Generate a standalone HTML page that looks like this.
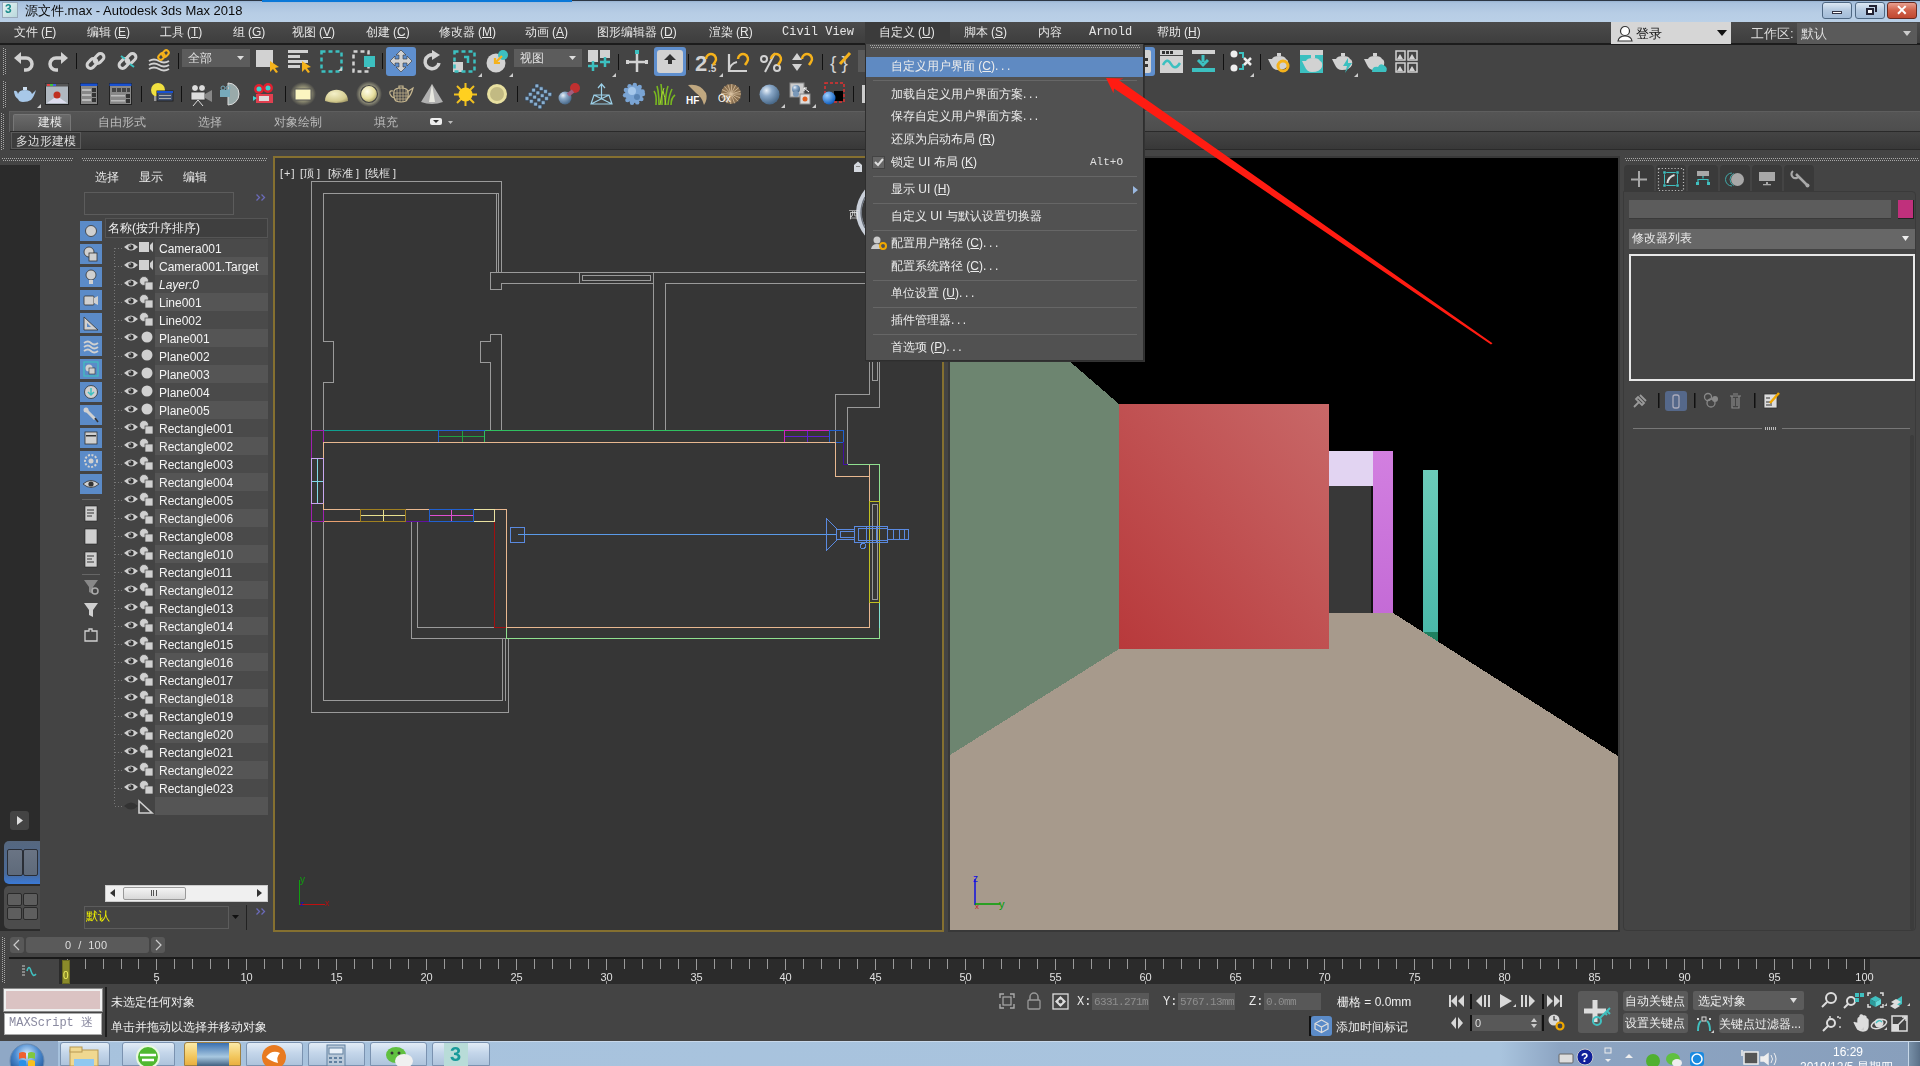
<!DOCTYPE html>
<html><head><meta charset="utf-8">
<style>
*{margin:0;padding:0;box-sizing:border-box}
html,body{width:1920px;height:1066px;overflow:hidden;-webkit-font-smoothing:antialiased;background:#444444;font-family:"Liberation Sans",sans-serif;font-size:12px;color:#dcdcdc;position:relative}
.a{position:absolute}
.t{position:absolute;white-space:nowrap;line-height:1;will-change:transform}
svg{position:absolute;overflow:visible}
.dh{position:absolute;height:3px;background:repeating-linear-gradient(90deg,#a8a8a8 0 1px,transparent 1px 2px) 0 0/100% 1px no-repeat,repeating-linear-gradient(90deg,transparent 0 1px,#a8a8a8 1px 2px) 0 2px/100% 1px no-repeat}
.dv{position:absolute;width:3px;background:repeating-linear-gradient(#a8a8a8 0 1px,transparent 1px 2px) 0 0/1px 100% no-repeat,repeating-linear-gradient(transparent 0 1px,#a8a8a8 1px 2px) 2px 0/1px 100% no-repeat}
</style></head><body>
<!-- title bar -->
<div class="a" style="left:0;top:0;width:1920px;height:22px;background:linear-gradient(#8eaacb 0,#a9c2de 3px,#b7cde5 60%,#bad0e7)"></div>
<div class="a" style="left:0;top:0;width:1920px;height:1px;background:#2c3644"></div><div class="a" style="left:262px;top:0;width:310px;height:2px;background:#0a78d8"></div>
<div class="a" style="left:2px;top:2px;width:16px;height:16px;background:linear-gradient(135deg,#e8f4f4,#b8d8dc);border:1px solid #9ab"></div>
<div class="t" style="left:5px;top:3px;font-size:12px;font-weight:bold;color:#1b8c8c">3</div>
<div class="t" style="left:25px;top:4px;font-size:13px;color:#0a0a0a">源文件.max - Autodesk 3ds Max 2018</div>
<!-- window buttons -->
<div class="a" style="left:1822px;top:2px;width:30px;height:17px;border:1px solid #4f6883;border-radius:3px;background:linear-gradient(#dce8f4,#b4c9e0 50%,#a3bcd8)"></div>
<div class="a" style="left:1832px;top:11px;width:10px;height:3px;background:#fff;border:1px solid #334"></div>
<div class="a" style="left:1855px;top:2px;width:30px;height:17px;border:1px solid #4f6883;border-radius:3px;background:linear-gradient(#dce8f4,#b4c9e0 50%,#a3bcd8)"></div>
<div class="a" style="left:1866px;top:8px;width:8px;height:7px;border:2px solid #223;background:#fff"></div>
<div class="a" style="left:1869px;top:5px;width:8px;height:7px;border:2px solid #223;border-left:0;border-bottom:0"></div>
<div class="a" style="left:1887px;top:2px;width:30px;height:17px;border:1px solid #6a2a20;border-radius:3px;background:linear-gradient(#e8a090,#d06048 50%,#c04830)"></div>
<div class="t" style="left:1896px;top:3px;font-size:14px;font-weight:bold;color:#fff">✕</div>

<!-- menu bar -->
<div class="a" style="left:0;top:22px;width:1920px;height:22px;background:linear-gradient(#4b4b4b,#444 50%,#3d3d3d)"></div>
<div class="a" style="left:0;top:43px;width:1920px;height:2px;background:#1c1c1c"></div>
<div class="a" style="left:865px;top:22px;width:85px;height:22px;background:#3b3b3b"></div>

<!-- login -->
<div class="a" style="left:1611px;top:22px;width:120px;height:22px;background:#d6d6d6"></div>
<svg style="left:1616px;top:25px" width="18" height="17"><circle cx="9" cy="6" r="4.5" fill="#fff" stroke="#333" stroke-width="1.2"/><path d="M2 16 Q3 11 9 11 Q15 11 16 16 Z" fill="#fff" stroke="#333" stroke-width="1.2"/></svg>
<div class="t" style="left:1636px;top:27px;font-size:13px;color:#111">登录</div>
<svg style="left:1717px;top:30px" width="10" height="6"><path d="M0 0 L10 0 L5 6Z" fill="#111"/></svg>
<div class="t" style="left:1751px;top:27px;font-size:13px;color:#ddd">工作区:</div>
<div class="a" style="left:1797px;top:23px;width:120px;height:21px;background:#5a5a5a"></div>
<div class="t" style="left:1801px;top:27px;font-size:13px;color:#ddd">默认</div>
<svg style="left:1903px;top:31px" width="8" height="5"><path d="M0 0 L8 0 L4 5Z" fill="#ccc"/></svg>

<!-- toolbar -->
<div class="a" style="left:0;top:45px;width:1920px;height:65px;background:#444"></div>
<div class="dv" style="left:3px;top:48px;height:27px"></div>
<div class="dv" style="left:3px;top:81px;height:27px"></div>
<div class="dv" style="left:1px;top:113px;height:37px"></div>

<!-- ribbon -->
<div class="a" style="left:9px;top:111px;width:1911px;height:21px;background:linear-gradient(#555,#4d4d4d);border-top:1px solid #5e5e5e;border-left:1px solid #5e5e5e"></div>
<div class="a" style="left:13px;top:114px;width:58px;height:18px;background:linear-gradient(#6a6a6a,#555);border:1px solid #777;border-bottom:0;border-radius:2px 2px 0 0"></div>
<div class="t" style="left:38px;top:116px;font-size:12px;color:#e8e8e8">建模</div>
<div class="t" style="left:98px;top:116px;font-size:12px;color:#bbb">自由形式</div>
<div class="t" style="left:198px;top:116px;font-size:12px;color:#bbb">选择</div>
<div class="t" style="left:274px;top:116px;font-size:12px;color:#bbb">对象绘制</div>
<div class="t" style="left:374px;top:116px;font-size:12px;color:#bbb">填充</div>
<div class="a" style="left:430px;top:118px;width:12px;height:7px;background:#eee;border-radius:2px"></div>
<svg style="left:433px;top:120px" width="6" height="4"><path d="M0 0 L6 0 L3 3Z" fill="#333"/></svg>
<svg style="left:448px;top:121px" width="5" height="3"><path d="M0 0 L5 0 L2.5 3Z" fill="#bbb"/></svg>
<div class="a" style="left:10px;top:131px;width:1910px;height:1px;background:#2a2a2a"></div><div class="a" style="left:10px;top:132px;width:1910px;height:18px;background:linear-gradient(#444,#383838);border-bottom:1px solid #2a2a2a"></div>
<div class="a" style="left:11px;top:132px;width:70px;height:17px;background:#3c3c3c;border:1px solid #5a5a5a"></div>
<div class="t" style="left:16px;top:135px;font-size:12px;color:#ddd">多边形建模</div>

<!-- dotted separators -->
<div class="dh" style="left:2px;top:158px;width:71px"></div>
<div class="dh" style="left:82px;top:158px;width:185px"></div>
<div class="dh" style="left:1625px;top:158px;width:294px"></div>

<div class="t" style="left:14px;top:26px;font-size:12px;color:#e6e6e6">文件<span style="margin-left:3px">(<u>F</u>)</span></div>
<div class="t" style="left:87px;top:26px;font-size:12px;color:#e6e6e6">编辑<span style="margin-left:3px">(<u>E</u>)</span></div>
<div class="t" style="left:160px;top:26px;font-size:12px;color:#e6e6e6">工具<span style="margin-left:3px">(<u>T</u>)</span></div>
<div class="t" style="left:233px;top:26px;font-size:12px;color:#e6e6e6">组<span style="margin-left:3px">(<u>G</u>)</span></div>
<div class="t" style="left:292px;top:26px;font-size:12px;color:#e6e6e6">视图<span style="margin-left:3px">(<u>V</u>)</span></div>
<div class="t" style="left:366px;top:26px;font-size:12px;color:#e6e6e6">创建<span style="margin-left:3px">(<u>C</u>)</span></div>
<div class="t" style="left:439px;top:26px;font-size:12px;color:#e6e6e6">修改器<span style="margin-left:3px">(<u>M</u>)</span></div>
<div class="t" style="left:525px;top:26px;font-size:12px;color:#e6e6e6">动画<span style="margin-left:3px">(<u>A</u>)</span></div>
<div class="t" style="left:597px;top:26px;font-size:12px;color:#e6e6e6">图形编辑器<span style="margin-left:3px">(<u>D</u>)</span></div>
<div class="t" style="left:709px;top:26px;font-size:12px;color:#e6e6e6">渲染<span style="margin-left:3px">(<u>R</u>)</span></div>
<div class="t" style="left:782px;top:26px;font-size:12px;font-family:'Liberation Mono',monospace;color:#e6e6e6">Civil View</div>
<div class="t" style="left:879px;top:26px;font-size:12px;color:#e6e6e6">自定义<span style="margin-left:3px">(<u>U</u>)</span></div>
<div class="t" style="left:964px;top:26px;font-size:12px;color:#e6e6e6">脚本<span style="margin-left:3px">(<u>S</u>)</span></div>
<div class="t" style="left:1038px;top:26px;font-size:12px;color:#e6e6e6">内容</div>
<div class="t" style="left:1089px;top:26px;font-size:12px;font-family:'Liberation Mono',monospace;color:#e6e6e6">Arnold</div>
<div class="t" style="left:1157px;top:26px;font-size:12px;color:#e6e6e6">帮助<span style="margin-left:3px">(<u>H</u>)</span></div>
<svg style="left:14px;top:52px" width="22" height="19" viewBox="0 0 22 19"><path d="M3 6 H12 A6 6 0 0 1 12 18 H10" fill="none" stroke="#d2d2d2" stroke-width="3.5"/><path d="M0 6 L7 0 L7 12Z" fill="#d2d2d2"/></svg>
<svg style="left:46px;top:52px" width="22" height="19" viewBox="0 0 22 19"><path d="M19 6 H10 A6 6 0 0 0 10 18 H12" fill="none" stroke="#d2d2d2" stroke-width="3.5"/><path d="M22 6 L15 0 L15 12Z" fill="#d2d2d2"/></svg>
<div class="a" style="left:76px;top:53px;width:1px;height:16px;background:#111"></div>
<svg style="left:85px;top:51px" width="21" height="21" viewBox="0 0 21 21"><g fill="none" stroke="#d2d2d2" stroke-width="3"><rect x="1.5" y="9" width="11" height="7" rx="3.5" transform="rotate(-45 7 12.5)"/><rect x="8.5" y="4" width="11" height="7" rx="3.5" transform="rotate(-45 14 7.5)"/></g></svg>
<svg style="left:117px;top:51px" width="21" height="21" viewBox="0 0 21 21"><g fill="none" stroke="#d2d2d2" stroke-width="3"><rect x="1.5" y="9" width="11" height="7" rx="3.5" transform="rotate(-45 7 12.5)"/><rect x="8.5" y="4" width="11" height="7" rx="3.5" transform="rotate(-45 14 7.5)"/></g><path d="M4 5 L8 8 M13 13 L17 16" stroke="#3cc0c0" stroke-width="2"/></svg>
<svg style="left:148px;top:50px" width="22" height="22" viewBox="0 0 22 22"><g fill="none" stroke="#d2d2d2" stroke-width="2"><path d="M1 11 Q6 8 11 11 T21 11"/><path d="M1 15 Q6 12 11 15 T21 15"/><path d="M1 19 Q6 16 11 19 T21 19"/></g><g fill="none" stroke="#f5b21b" stroke-width="2"><rect x="10" y="4" width="7" height="5" rx="2.5" transform="rotate(-45 13.5 6.5)"/><rect x="14" y="1" width="7" height="5" rx="2.5" transform="rotate(-45 17.5 3.5)"/></g></svg>
<div class="a" style="left:178px;top:53px;width:1px;height:16px;background:#111"></div>
<div class="a" style="left:182px;top:49px;width:68px;height:18px;background:#5c5c5c"></div>
<div class="t" style="left:188px;top:52px;font-size:12px;color:#e0e0e0">全部</div>
<svg style="left:237px;top:56px" width="7" height="4" viewBox="0 0 7 4"><path d="M0 0 L7 0 L3.5 4Z" fill="#ddd"/></svg>
<svg style="left:256px;top:50px" width="23" height="23" viewBox="0 0 23 23"><rect x="0" y="0" width="17" height="17" fill="#d2d2d2"/><path d="M14 11 L14 22 L17 19 L20 23 L22 22 L19 18 L23 17Z" fill="#f5b21b"/></svg>
<svg style="left:288px;top:50px" width="23" height="23" viewBox="0 0 23 23"><g fill="#d2d2d2"><rect x="0" y="0" width="20" height="3"/><rect x="0" y="5" width="12" height="3"/><rect x="0" y="10" width="20" height="3"/><rect x="0" y="15" width="12" height="3"/></g><path d="M14 11 L14 22 L17 19 L20 23 L22 22 L19 18 L23 17Z" fill="#f5b21b"/></svg>
<svg style="left:320px;top:50px" width="23" height="23" viewBox="0 0 23 23"><rect x="1.5" y="1.5" width="20" height="20" fill="none" stroke="#3cc0c0" stroke-width="2.5" stroke-dasharray="4 3"/></svg>
<svg style="left:338px;top:67px" width="4" height="4" viewBox="0 0 4 4"><path d="M4 0 L4 4 L0 4Z" fill="#ccc"/></svg>
<svg style="left:352px;top:50px" width="24" height="23" viewBox="0 0 24 23"><rect x="1.5" y="1.5" width="15" height="20" fill="none" stroke="#d2d2d2" stroke-width="2.5" stroke-dasharray="4 3"/><rect x="12" y="6" width="11" height="11" fill="#3cc0c0"/></svg>
<div class="a" style="left:382px;top:53px;width:1px;height:16px;background:#111"></div>
<div class="a" style="left:386px;top:47px;width:30px;height:29px;background:#5f8fce;border-radius:3px"></div>
<svg style="left:390px;top:50px" width="22" height="22" viewBox="0 0 22 22"><path d="M11 0 L16 5 L13 5 L13 9 L17 9 L17 6 L22 11 L17 16 L17 13 L13 13 L13 17 L16 17 L11 22 L6 17 L9 17 L9 13 L5 13 L5 16 L0 11 L5 6 L5 9 L9 9 L9 5 L6 5Z" fill="#d2d2d2" stroke="#333" stroke-width="0.6"/></svg>
<svg style="left:423px;top:50px" width="20" height="22" viewBox="0 0 20 22"><path d="M16 13 A7 7 0 1 1 11 5" fill="none" stroke="#d2d2d2" stroke-width="3.5"/><path d="M9 0 L17 5 L9 10Z" fill="#d2d2d2"/></svg>
<svg style="left:453px;top:50px" width="23" height="23" viewBox="0 0 23 23"><rect x="0" y="12" width="10" height="10" fill="#d2d2d2"/><rect x="1.5" y="1.5" width="20" height="20" fill="none" stroke="#3cc0c0" stroke-width="2.5" stroke-dasharray="4 3"/><path d="M11 7 H15 V13" fill="none" stroke="#3cc0c0" stroke-width="2.5"/></svg>
<svg style="left:478px;top:73px" width="4" height="4" viewBox="0 0 4 4"><path d="M4 0 L4 4 L0 4Z" fill="#ccc"/></svg>
<svg style="left:486px;top:50px" width="23" height="23" viewBox="0 0 23 23"><circle cx="10" cy="13" r="9.5" fill="#d2d2d2"/><circle cx="17" cy="5" r="5" fill="#3cc0c0"/><path d="M16 6 L9 13 M9 8 V13 H14" stroke="#f5b21b" stroke-width="2.2" fill="none"/></svg>
<svg style="left:509px;top:73px" width="4" height="4" viewBox="0 0 4 4"><path d="M4 0 L4 4 L0 4Z" fill="#ccc"/></svg>
<div class="a" style="left:514px;top:49px;width:68px;height:18px;background:#5c5c5c"></div>
<div class="t" style="left:520px;top:52px;font-size:12px;color:#e0e0e0">视图</div>
<svg style="left:569px;top:56px" width="7" height="4" viewBox="0 0 7 4"><path d="M0 0 L7 0 L3.5 4Z" fill="#ddd"/></svg>
<svg style="left:588px;top:50px" width="23" height="23" viewBox="0 0 23 23"><path d="M0 0 H10 V12 H0Z M12 0 H22 V8 H12Z" fill="#d2d2d2"/><path d="M5 11 V21 M0 16 H10 M17 7 V17 M12 12 H22" stroke="#3cc0c0" stroke-width="2.5"/></svg>
<svg style="left:612px;top:73px" width="4" height="4" viewBox="0 0 4 4"><path d="M4 0 L4 4 L0 4Z" fill="#ccc"/></svg>
<div class="a" style="left:618px;top:54px;width:1px;height:16px;background:#111"></div>
<svg style="left:626px;top:50px" width="23" height="23" viewBox="0 0 23 23"><path d="M11 2 V22 M0 12 H22" stroke="#d2d2d2" stroke-width="2.5"/><rect x="9" y="0" width="4" height="4" fill="#3cc0c0"/><rect x="0" y="10" width="3" height="4" fill="#d2d2d2"/><rect x="19" y="10" width="3" height="4" fill="#d2d2d2"/></svg>
<div class="a" style="left:654px;top:47px;width:32px;height:29px;background:#5f8fce;border-radius:3px"></div>
<svg style="left:657px;top:50px" width="26" height="23" viewBox="0 0 26 23"><rect x="0" y="0" width="26" height="23" rx="3" fill="#d2d2d2"/><path d="M13 4 L19 10 L15 10 L15 14 L11 14 L11 10 L7 10Z" fill="#333"/></svg>
<div class="a" style="left:688px;top:54px;width:1px;height:16px;background:#111"></div>
<svg style="left:695px;top:50px" width="26" height="23" viewBox="0 0 26 23"><text x="0" y="21" font-size="22" font-weight="bold" fill="#d2d2d2" font-family="Liberation Sans">2</text><text x="13" y="22" font-size="10" font-weight="bold" fill="#d2d2d2" font-family="Liberation Sans">.5</text><path d="M11 9 A5 5 0 1 1 20 12 L18 15" fill="none" stroke="#f5b21b" stroke-width="2.5"/></svg>
<svg style="left:719px;top:73px" width="4" height="4" viewBox="0 0 4 4"><path d="M4 0 L4 4 L0 4Z" fill="#ccc"/></svg>
<svg style="left:727px;top:50px" width="24" height="23" viewBox="0 0 24 23"><path d="M2 4 V21 H20 M2 21 A10 10 0 0 1 10 12" fill="none" stroke="#d2d2d2" stroke-width="2.2"/><path d="M11 9 A5 5 0 1 1 20 12 L18 15" fill="none" stroke="#f5b21b" stroke-width="2.5"/></svg>
<svg style="left:760px;top:50px" width="24" height="23" viewBox="0 0 24 23"><circle cx="4" cy="9" r="3" fill="none" stroke="#d2d2d2" stroke-width="2"/><circle cx="17" cy="18" r="3" fill="none" stroke="#d2d2d2" stroke-width="2"/><path d="M5 22 L15 3" stroke="#d2d2d2" stroke-width="2"/><path d="M11 9 A5 5 0 1 1 20 12 L18 15" fill="none" stroke="#f5b21b" stroke-width="2.5"/></svg>
<svg style="left:791px;top:50px" width="24" height="23" viewBox="0 0 24 23"><path d="M1 10 L6 3 L11 10Z M1 14 L6 21 L11 14Z" fill="#d2d2d2"/><path d="M11 9 A5 5 0 1 1 20 12 L18 15" fill="none" stroke="#f5b21b" stroke-width="2.5"/></svg>
<div class="a" style="left:822px;top:54px;width:1px;height:16px;background:#111"></div>
<svg style="left:830px;top:50px" width="23" height="23" viewBox="0 0 23 23"><text x="0" y="19" font-size="19" fill="#d2d2d2" font-family="Liberation Sans">{ }</text><path d="M10 14 L20 3" stroke="#f5b21b" stroke-width="3"/></svg>
<div class="a" style="left:858px;top:50px;width:8px;height:22px;background:#5a5a5a"></div>
<div class="a" style="left:1143px;top:47px;width:12px;height:29px;background:#5f8fce;border-radius:0 3px 3px 0"></div>
<svg style="left:1143px;top:50px" width="9" height="23" viewBox="0 0 9 23"><rect x="0" y="0" width="8" height="23" rx="2" fill="#d2d2d2"/><rect x="0" y="8" width="5" height="3" fill="#333"/><rect x="0" y="14" width="5" height="3" fill="#333"/></svg>
<svg style="left:1160px;top:50px" width="23" height="23" viewBox="0 0 23 23"><rect x="0" y="0" width="23" height="23" fill="#d2d2d2"/><rect x="0" y="5" width="23" height="1" fill="#444"/><rect x="2" y="1" width="3" height="3" fill="#333"/><rect x="6" y="1" width="3" height="3" fill="#333"/><rect x="10" y="1" width="3" height="3" fill="#333"/><path d="M3 15 Q7 7 11 14 T20 13" fill="none" stroke="#3cc0c0" stroke-width="2.5"/></svg>
<svg style="left:1192px;top:50px" width="23" height="23" viewBox="0 0 23 23"><rect x="0" y="0" width="23" height="4" fill="#d2d2d2"/><rect x="0" y="18" width="23" height="4" fill="#3cc0c0"/><path d="M11 5 V12 M6 10 L11 15 L16 10" stroke="#3cc0c0" stroke-width="3" fill="none"/></svg>
<div class="a" style="left:1223px;top:54px;width:1px;height:16px;background:#111"></div>
<svg style="left:1230px;top:50px" width="23" height="23" viewBox="0 0 23 23"><circle cx="4" cy="4" r="3.5" fill="#eee"/><circle cx="4" cy="18" r="3.5" fill="#eee"/><path d="M9 3 H13 V8 M9 19 H13 V14" stroke="#3cc0c0" stroke-width="2" fill="none"/><path d="M14 8 L21 15 M21 8 L14 15" stroke="#eee" stroke-width="2.5"/></svg>
<svg style="left:1250px;top:73px" width="4" height="4" viewBox="0 0 4 4"><path d="M4 0 L4 4 L0 4Z" fill="#ccc"/></svg>
<div class="a" style="left:1260px;top:54px;width:1px;height:16px;background:#111"></div>
<svg style="left:1267px;top:50px" width="24" height="23" viewBox="0 0 24 23"><path d="M1 9 L5 9 Q6 6 12 6 Q18 6 19 9 Q22 10 21 15 Q19 20 11 20 Q6 20 4 15Z" fill="#d2d2d2"/><rect x="10" y="3" width="4" height="3" fill="#d2d2d2"/><circle cx="16" cy="16" r="5" fill="none" stroke="#f5b21b" stroke-width="3"/></svg>
<svg style="left:1300px;top:50px" width="23" height="23" viewBox="0 0 23 23"><rect x="0" y="0" width="23" height="23" fill="#3cc0c0"/><rect x="0" y="0" width="23" height="5" fill="#d2d2d2"/><g transform="translate(1 2)"><path d="M1 9 L5 9 Q6 6 12 6 Q18 6 19 9 Q22 10 21 15 Q19 20 11 20 Q6 20 4 15Z" fill="#d2d2d2"/><rect x="10" y="3" width="4" height="3" fill="#d2d2d2"/></g></svg>
<svg style="left:1331px;top:50px" width="24" height="23" viewBox="0 0 24 23"><path d="M1 9 L5 9 Q6 6 12 6 Q18 6 19 9 Q22 10 21 15 Q19 20 11 20 Q6 20 4 15Z" fill="#d2d2d2"/><rect x="10" y="3" width="4" height="3" fill="#d2d2d2"/><path d="M17 8 L12 16 H16 L14 23 L21 13 H17Z" fill="#3cc0c0"/></svg>
<svg style="left:1354px;top:73px" width="4" height="4" viewBox="0 0 4 4"><path d="M4 0 L4 4 L0 4Z" fill="#ccc"/></svg>
<svg style="left:1363px;top:50px" width="24" height="23" viewBox="0 0 24 23"><path d="M1 9 L5 9 Q6 6 12 6 Q18 6 19 9 Q22 10 21 15 Q19 20 11 20 Q6 20 4 15Z" fill="#d2d2d2"/><rect x="10" y="3" width="4" height="3" fill="#d2d2d2"/><path d="M9 22 Q9 16 15 17 Q17 12 22 16 Q25 18 23 22Z" fill="#3cc0c0"/></svg>
<svg style="left:1395px;top:50px" width="23" height="23" viewBox="0 0 23 23"><g fill="none" stroke="#d2d2d2" stroke-width="1.5"><rect x="1" y="1" width="9" height="9"/><rect x="13" y="1" width="9" height="9"/><rect x="1" y="13" width="9" height="9"/><rect x="13" y="13" width="9" height="9"/></g><g fill="#d2d2d2"><path d="M2 9 L5 4 L8 9Z M14 9 L17 4 L20 9Z M2 21 L5 16 L8 21Z M14 21 L17 16 L20 21Z"/></g></svg>
<svg style="left:0px;top:0px" width="1" height="1" viewBox="0 0 1 1"><defs><radialGradient id="sph" cx="0.35" cy="0.3" r="0.7"><stop offset="0" stop-color="#e8f0f8"/><stop offset="0.4" stop-color="#8aa8c8"/><stop offset="1" stop-color="#4a6a8a"/></radialGradient><radialGradient id="ysph" cx="0.4" cy="0.35" r="0.7"><stop offset="0" stop-color="#fffde8"/><stop offset="0.6" stop-color="#e8e0a0"/><stop offset="1" stop-color="#a09860"/></radialGradient><radialGradient id="bsph" cx="0.35" cy="0.3" r="0.7"><stop offset="0" stop-color="#a0d0ff"/><stop offset="1" stop-color="#1060c0"/></radialGradient></defs></svg>
<svg style="left:14px;top:85px" width="22" height="17" viewBox="0 0 22 17"><path d="M0 6 Q3 5 4 9 Q5 5 11 5 Q17 5 18 9 L22 5 Q20 12 17 15 Q14 17 9 17 Q5 17 4 14 Q0 11 0 6Z" fill="#a8c8e8"/><rect x="9" y="2" width="4" height="3" fill="#cde"/></svg>
<svg style="left:37px;top:104px" width="4" height="4" viewBox="0 0 4 4"><path d="M4 0 L4 4 L0 4Z" fill="#ccc"/></svg>
<svg style="left:45px;top:83px" width="24" height="22" viewBox="0 0 24 22"><rect x="0.5" y="0.5" width="23" height="21" fill="#b0b8c0" stroke="#222"/><rect x="0.5" y="0.5" width="23" height="3" fill="#555"/><rect x="2" y="1" width="3" height="2" fill="#e04040"/><rect x="5" y="1" width="3" height="2" fill="#40c040"/><rect x="8" y="1" width="3" height="2" fill="#4060e0"/><path d="M2 20 L12 13 L22 20Z" fill="#dde"/><circle cx="12" cy="12" r="3.5" fill="#c03020"/></svg>
<svg style="left:80px;top:83px" width="18" height="22" viewBox="0 0 18 22"><rect x="0.5" y="0.5" width="17" height="21" fill="#888" stroke="#222"/><rect x="0.5" y="0.5" width="17" height="2.5" fill="#1850d0"/><g fill="#bbb"><rect x="2" y="6" width="9" height="2"/><rect x="2" y="11" width="9" height="2"/><rect x="2" y="16" width="9" height="2"/></g><g fill="#333"><rect x="12" y="5" width="4" height="4"/><rect x="12" y="10" width="4" height="4"/><rect x="12" y="15" width="4" height="4"/></g></svg>
<svg style="left:109px;top:83px" width="23" height="22" viewBox="0 0 23 22"><rect x="0.5" y="0.5" width="22" height="21" fill="#888" stroke="#222"/><rect x="0.5" y="0.5" width="22" height="2.5" fill="#1850d0"/><g fill="#444"><rect x="3" y="5" width="4" height="4"/><rect x="8" y="5" width="4" height="4"/><rect x="13" y="5" width="4" height="4"/><rect x="18" y="5" width="3" height="4"/></g><g fill="#bbb"><rect x="2" y="12" width="14" height="1.5"/><rect x="2" y="17" width="14" height="1.5"/></g><g fill="#333"><rect x="17" y="11" width="4" height="4"/><rect x="17" y="16" width="4" height="4"/></g></svg>
<div class="a" style="left:141px;top:86px;width:1px;height:16px;background:#111"></div>
<svg style="left:150px;top:83px" width="23" height="22" viewBox="0 0 23 22"><circle cx="8" cy="7" r="7" fill="#f0e040"/><rect x="4" y="13" width="7" height="5" fill="#999"/><rect x="7" y="8" width="16" height="10" fill="#405070" stroke="#222"/><rect x="7" y="8" width="16" height="2" fill="#1850d0"/><g fill="#aaa"><rect x="9" y="12" width="12" height="1"/><rect x="9" y="15" width="12" height="1"/></g></svg>
<div class="a" style="left:181px;top:86px;width:1px;height:16px;background:#111"></div>
<svg style="left:190px;top:84px" width="22" height="22" viewBox="0 0 22 22"><circle cx="5" cy="4" r="3.5" fill="#ddd" stroke="#333"/><circle cx="12" cy="4" r="3.5" fill="#ddd" stroke="#333"/><rect x="1" y="8" width="14" height="8" fill="#ddd" stroke="#333" stroke-width="0.8"/><path d="M15 10 L22 6 V18 L15 14Z" fill="#888"/><path d="M8 16 L3 22 M8 16 L13 22" stroke="#ddd" stroke-width="1"/></svg>
<svg style="left:220px;top:83px" width="23" height="22" viewBox="0 0 23 22"><path d="M8 0 A11 11 0 0 1 8 22Z" fill="#9aa"/><path d="M8 0 A11 11 0 0 1 8 22Z" fill="none" stroke="#ddd"/><rect x="0" y="7" width="10" height="7" fill="#7ab" /><circle cx="3" cy="5" r="2" fill="none" stroke="#7ab"/><circle cx="8" cy="5" r="2" fill="none" stroke="#7ab"/></svg>
<svg style="left:253px;top:83px" width="23" height="22" viewBox="0 0 23 22"><circle cx="6" cy="6" r="5" fill="#e02030"/><circle cx="6" cy="6" r="2.5" fill="#40d0d0"/><circle cx="15" cy="5" r="5" fill="#e02030"/><circle cx="15" cy="5" r="2.5" fill="#40d0d0"/><rect x="3" y="11" width="17" height="9" fill="#e04050"/><rect x="6" y="13" width="10" height="5" fill="#ddd"/><path d="M0 13 L4 15 L0 18Z" fill="#40d0d0"/></svg>
<div class="a" style="left:285px;top:86px;width:1px;height:16px;background:#111"></div>
<svg style="left:290px;top:82px" width="26" height="24" viewBox="0 0 26 24"><defs><radialGradient id="glw"><stop offset="0.55" stop-color="#d8d4a0" stop-opacity="0.55"/><stop offset="1" stop-color="#d8d4a0" stop-opacity="0"/></radialGradient></defs><rect x="0" y="0" width="26" height="24" rx="8" fill="url(#glw)"/><rect x="5" y="7" width="16" height="11" fill="#fbf6c0" stroke="#555" stroke-width="1"/></svg>
<svg style="left:324px;top:84px" width="25" height="20" viewBox="0 0 25 20"><defs><radialGradient id="dome" cx="0.4" cy="0.3" r="0.8"><stop offset="0" stop-color="#f4f0c8"/><stop offset="0.7" stop-color="#d4cc90"/><stop offset="1" stop-color="#9a9060"/></radialGradient></defs><path d="M1 17 C1 2 24 2 24 17 Q12 21 1 17Z" fill="url(#dome)"/></svg>
<svg style="left:356px;top:81px" width="26" height="26" viewBox="0 0 26 26"><defs><radialGradient id="sglw"><stop offset="0.6" stop-color="#e8e4b8" stop-opacity="0.6"/><stop offset="1" stop-color="#e8e4b8" stop-opacity="0"/></radialGradient></defs><circle cx="13" cy="13" r="13" fill="url(#sglw)"/><circle cx="13" cy="13" r="8.5" fill="url(#ysph)" stroke="#444" stroke-width="1.2"/></svg>
<svg style="left:389px;top:84px" width="25" height="20" viewBox="0 0 25 20"><g fill="none" stroke="#c8b890" stroke-width="1.2"><path d="M4 7 Q0 6 1 10 Q3 14 6 14 M18 8 L24 4 Q22 12 18 15 M5 7 Q6 4 12 4 Q18 4 19 7 Q20 14 17 17 Q12 19 7 17 Q4 14 5 7Z M10 4 V2 H14 V4"/><path d="M8 5 V17 M11 4 V18 M14 4 V18 M17 5 V17 M5 9 H19 M5 12 H19 M6 15 H18" stroke-width="0.7"/></g></svg>
<svg style="left:421px;top:84px" width="22" height="20" viewBox="0 0 22 20"><path d="M11 0 L22 18 Q11 22 0 18Z" fill="#b0b0b0"/><path d="M11 0 L14 18 L8 18Z" fill="#e8e8e0"/></svg>
<svg style="left:454px;top:83px" width="23" height="23" viewBox="0 0 23 23"><g stroke="#f0c020" stroke-width="2"><path d="M11.5 0 V23 M0 11.5 H23 M3 3 L20 20 M20 3 L3 20"/></g><circle cx="11.5" cy="11.5" r="7" fill="#ffd020"/></svg>
<svg style="left:487px;top:84px" width="20" height="20" viewBox="0 0 20 20"><circle cx="10" cy="10" r="10" fill="#e8e0a0"/><circle cx="10" cy="10" r="7" fill="#a8a070" opacity="0.6"/></svg>
<div class="a" style="left:517px;top:86px;width:1px;height:16px;background:#111"></div>
<svg style="left:525px;top:83px" width="26" height="25" viewBox="0 0 26 25"><rect x="10.0" y="1.0" width="3.8" height="3.8" rx="0.8" fill="#8ab0d0" stroke="#2a3a50" stroke-width="0.6"/><rect x="14.3" y="3.8" width="3.8" height="3.8" rx="0.8" fill="#8ab0d0" stroke="#2a3a50" stroke-width="0.6"/><rect x="18.6" y="6.6" width="3.8" height="3.8" rx="0.8" fill="#8ab0d0" stroke="#2a3a50" stroke-width="0.6"/><rect x="22.9" y="9.4" width="3.8" height="3.8" rx="0.8" fill="#8ab0d0" stroke="#2a3a50" stroke-width="0.6"/><rect x="6.7" y="5.2" width="3.8" height="3.8" rx="0.8" fill="#8ab0d0" stroke="#2a3a50" stroke-width="0.6"/><rect x="11.0" y="8.0" width="3.8" height="3.8" rx="0.8" fill="#8ab0d0" stroke="#2a3a50" stroke-width="0.6"/><rect x="15.3" y="10.8" width="3.8" height="3.8" rx="0.8" fill="#8ab0d0" stroke="#2a3a50" stroke-width="0.6"/><rect x="19.6" y="13.6" width="3.8" height="3.8" rx="0.8" fill="#8ab0d0" stroke="#2a3a50" stroke-width="0.6"/><rect x="3.4" y="9.4" width="3.8" height="3.8" rx="0.8" fill="#8ab0d0" stroke="#2a3a50" stroke-width="0.6"/><rect x="7.7" y="12.2" width="3.8" height="3.8" rx="0.8" fill="#8ab0d0" stroke="#2a3a50" stroke-width="0.6"/><rect x="12.0" y="15.0" width="3.8" height="3.8" rx="0.8" fill="#8ab0d0" stroke="#2a3a50" stroke-width="0.6"/><rect x="16.3" y="17.8" width="3.8" height="3.8" rx="0.8" fill="#8ab0d0" stroke="#2a3a50" stroke-width="0.6"/><rect x="0.1" y="13.6" width="3.8" height="3.8" rx="0.8" fill="#8ab0d0" stroke="#2a3a50" stroke-width="0.6"/><rect x="4.4" y="16.4" width="3.8" height="3.8" rx="0.8" fill="#8ab0d0" stroke="#2a3a50" stroke-width="0.6"/><rect x="8.7" y="19.2" width="3.8" height="3.8" rx="0.8" fill="#8ab0d0" stroke="#2a3a50" stroke-width="0.6"/><rect x="13.0" y="22.0" width="3.8" height="3.8" rx="0.8" fill="#8ab0d0" stroke="#2a3a50" stroke-width="0.6"/></svg>
<svg style="left:558px;top:83px" width="23" height="22" viewBox="0 0 23 22"><circle cx="7" cy="15" r="6.5" fill="url(#sph)"/><circle cx="17" cy="5" r="5" fill="#c03030"/><path d="M10 12 L15 8" stroke="#a06080" stroke-width="4"/></svg>
<svg style="left:591px;top:83px" width="21" height="22" viewBox="0 0 21 22"><g fill="none" stroke="#9cd0e8" stroke-width="1.2"><path d="M3 12 L18 12 L21 21 L0 21Z M3 12 L21 21 M18 12 L0 21 M10.5 2 V16 M7 5 L10.5 1 L14 5"/></g></svg>
<svg style="left:623px;top:83px" width="22" height="22" viewBox="0 0 22 22"><g fill="#7aa4d4"><circle cx="20.0" cy="11.0" r="2.2"/><circle cx="18.4" cy="16.1" r="2.2"/><circle cx="14.3" cy="19.4" r="2.2"/><circle cx="9.0" cy="19.8" r="2.2"/><circle cx="4.4" cy="17.1" r="2.2"/><circle cx="2.1" cy="12.3" r="2.2"/><circle cx="2.9" cy="7.0" r="2.2"/><circle cx="6.6" cy="3.2" r="2.2"/><circle cx="11.8" cy="2.0" r="2.2"/><circle cx="16.7" cy="4.0" r="2.2"/><circle cx="19.6" cy="8.5" r="2.2"/></g><circle cx="11" cy="11" r="9" fill="#7aa4d4"/><circle cx="9" cy="8" r="4" fill="#b0d0f0" opacity="0.8"/><circle cx="14" cy="14" r="3" fill="#5a84b4"/></svg>
<svg style="left:653px;top:83px" width="22" height="22" viewBox="0 0 22 22"><g stroke="#78b820" stroke-width="1.6" fill="none"><path d="M3 22 Q4 12 1 8 M6 22 Q6 10 4 3 M9 22 Q9 8 8 1 M12 22 Q13 9 15 3 M15 22 Q16 12 19 6 M18 22 Q18 15 22 12"/></g><g stroke="#a8d830" stroke-width="1" fill="none"><path d="M7 22 Q8 12 11 5 M13 22 Q12 14 10 8"/></g></svg>
<svg style="left:686px;top:83px" width="23" height="23" viewBox="0 0 23 23"><path d="M2 2 Q14 0 20 10 Q22 16 18 22 Q16 14 10 10 Q6 6 2 2Z" fill="#c0a880"/><text x="0" y="21" font-size="10" font-weight="bold" fill="#fff" font-family="Liberation Sans">HF</text></svg>
<svg style="left:718px;top:83px" width="23" height="23" viewBox="0 0 23 23"><circle cx="13" cy="11" r="10" fill="#8a7050"/><g stroke="#d8c0a0" stroke-width="0.8"><path d="M13 11 L23.0 11.0"/><path d="M13 11 L22.210609940028853 14.894183423086506"/><path d="M13 11 L19.967067093471655 18.173560908995228"/><path d="M13 11 L16.623577544766732 20.320390859672266"/><path d="M13 11 L12.708004776987112 20.995736030415053"/><path d="M13 11 L8.838531634528575 20.092974268256818"/><path d="M13 11 L5.626062844587542 17.754631805511508"/><path d="M13 11 L3.5777765933134162 14.349881501559047"/><path d="M13 11 L3.0170522420524684 10.416258565724199"/><path d="M13 11 L4.032415836658529 6.574795567051475"/><path d="M13 11 L6.463563791363881 3.4319750469207175"/><path d="M13 11 L9.926671300215807 1.4839792611048406"/><path d="M13 11 L13.874989834394473 1.038353911641595"/><path d="M13 11 L17.68516671300377 2.1654534427984693"/><path d="M13 11 L20.7556587851025 4.6873336212767915"/><path d="M13 11 L22.601702866503658 8.205845018010741"/></g><text x="0" y="19" font-size="10" fill="#fff" font-family="Liberation Sans">Ox</text></svg>
<div class="a" style="left:749px;top:86px;width:1px;height:16px;background:#111"></div>
<svg style="left:759px;top:84px" width="21" height="21" viewBox="0 0 21 21"><circle cx="10.5" cy="10.5" r="10" fill="url(#sph)"/></svg>
<svg style="left:781px;top:104px" width="4" height="4" viewBox="0 0 4 4"><path d="M4 0 L4 4 L0 4Z" fill="#ccc"/></svg>
<svg style="left:790px;top:83px" width="21" height="22" viewBox="0 0 21 22"><rect x="0" y="0" width="14" height="14" fill="#ccc" stroke="#888"/><circle cx="6" cy="6" r="4" fill="url(#sph)"/><circle cx="6" cy="11" r="3" fill="#7a98b8"/><rect x="10" y="11" width="10" height="10" fill="#ddd" stroke="#888"/><circle cx="15" cy="16" r="2.5" fill="#e06020"/><path d="M14 5 L19 9 M14 5 H17 M14 5 V8" stroke="#fff" stroke-width="1"/></svg>
<svg style="left:812px;top:104px" width="4" height="4" viewBox="0 0 4 4"><path d="M4 0 L4 4 L0 4Z" fill="#ccc"/></svg>
<svg style="left:822px;top:82px" width="23" height="23" viewBox="0 0 23 23"><rect x="3" y="1" width="19" height="19" fill="none" stroke="#e03030" stroke-width="1.5" stroke-dasharray="3 2"/><rect x="12" y="9" width="9" height="10" fill="#000"/><circle cx="7" cy="16" r="6.5" fill="url(#bsph)"/></svg>
<div class="a" style="left:853px;top:86px;width:1px;height:16px;background:#111"></div>
<div class="a" style="left:862px;top:85px;width:4px;height:18px;background:#ccc"></div>
<!-- left dark strip -->
<div class="a" style="left:0;top:165px;width:40px;height:766px;background:#2b2b2b"></div>
<!-- top viewport -->
<div class="a" style="left:273px;top:156px;width:671px;height:776px;background:#363636;border:2px solid #857030"></div>
<!-- perspective viewport -->
<div class="a" style="left:948px;top:156px;width:672px;height:776px;background:#383838"></div>
<div class="a" style="left:950px;top:158px;width:668px;height:772px;background:#000"></div>

<svg style="left:950px;top:158px" width="668" height="772" viewBox="950 158 668 772">
<defs>
<linearGradient id="rg" x1="0" y1="1" x2="1" y2="0"><stop offset="0" stop-color="#b8393b"/><stop offset="1" stop-color="#c86868"/></linearGradient>
<linearGradient id="pg" x1="0" y1="0" x2="0" y2="1"><stop offset="0" stop-color="#d27fe0"/><stop offset="1" stop-color="#c46bd6"/></linearGradient>
<linearGradient id="tg" x1="0" y1="0" x2="0" y2="1"><stop offset="0" stop-color="#6ccbb9"/><stop offset="1" stop-color="#4ab8a9"/></linearGradient>
</defs>
<polygon points="950,258 1119,404 1119,649 950,755" fill="#6d8570" shape-rendering="crispEdges"/>
<rect x="1119" y="404" width="210" height="245" fill="url(#rg)"/>
<rect x="1329" y="451" width="44" height="35" fill="#e2d4f2"/>
<rect x="1329" y="486" width="43" height="128" fill="#383838"/>
<rect x="1371" y="486" width="2" height="128" fill="#111"/>
<rect x="1373" y="451" width="20" height="163" fill="url(#pg)"/>
<rect x="1423" y="470" width="15" height="163" fill="url(#tg)"/>
<rect x="1423" y="632" width="15" height="10" fill="#1f8060"/>
<polygon points="950,755 1119,649 1329,649 1329,613 1393,613 1618,756 1618,930 950,930" fill="#a79a8c" shape-rendering="crispEdges"/>
<g stroke-width="1.5" fill="none">
<line x1="975" y1="905" x2="975" y2="879" stroke="#1010e0"/>
<line x1="975" y1="904" x2="1000" y2="904" stroke="#00a000"/>
</g>
<text x="973" y="882" font-size="10" fill="#1010e0" font-family="Liberation Sans">z</text>
<text x="999" y="908" font-size="11" fill="#00a000" font-family="Liberation Sans">y</text>
<text x="975" y="909" font-size="8" fill="#c02020" font-family="Liberation Sans">x</text>
</svg>

<div class="t" style="left:280px;top:168px;font-size:11px;color:#e0e0e0;letter-spacing:1px">[+]</div><div class="t" style="left:300px;top:168px;font-size:11px;color:#e0e0e0">[顶 ]</div><div class="t" style="left:328px;top:168px;font-size:11px;color:#e0e0e0">[标准 ]</div><div class="t" style="left:365px;top:168px;font-size:11px;color:#e0e0e0">[线框 ]</div>
<svg style="left:0;top:0" width="1920" height="1066" viewBox="0 0 1920 1066">
<g fill="none" stroke-width="1" shape-rendering="crispEdges">
<g stroke="#9a9a9a">
<!-- outer top -->
<polyline points="311.5,430 311.5,181.5 501.5,181.5 501.5,272.5"/>
<polyline points="866,272.5 490.5,272.5 490.5,289.5 501.5,289.5 501.5,283.5 653.5,283.5"/>
<line x1="579.5" y1="272.5" x2="579.5" y2="283.5"/>
<rect x="582.5" y="275.5" width="68" height="5"/>
<polyline points="653.5,272.5 653.5,430"/>
<polyline points="665.5,430 665.5,283.5 866,283.5"/>
<polyline points="323.5,430 323.5,382.5 333.5,382.5 333.5,341.5 323.5,341.5 323.5,193.5 498.5,193.5 498.5,272.5"/>
<line x1="496.5" y1="193.5" x2="496.5" y2="272.5"/>
<polyline points="501.5,430 501.5,334.5 490.5,334.5 490.5,341.5 480.5,341.5 480.5,362.5 490.5,362.5 490.5,430"/>
<polyline points="869.5,360 869.5,394.5 835.5,394.5 835.5,442"/>
<polyline points="879.5,360 879.5,407.5 847.5,407.5 847.5,464"/>
<rect x="872.5" y="360" width="5" height="20"/>
<!-- lower gray -->
<polyline points="311.5,521.5 311.5,712.5 508.5,712.5 508.5,639"/>
<polyline points="323.5,521.5 323.5,700.5 502.5,700.5 502.5,639"/>
<line x1="505.5" y1="639" x2="505.5" y2="700.5"/>
<polyline points="411.5,521.5 411.5,638.5 506,638.5"/>
<polyline points="417.5,521.5 417.5,627.5 494.5,627.5"/>
<rect x="872.5" y="504.5" width="5" height="95"/>
</g>
<!-- colored -->
<polyline stroke="#a020b0" points="311.5,458 311.5,430.5 323.5,430.5 323.5,458"/>
<polyline stroke="#a020b0" points="311.5,503 311.5,521.5 323.5,521.5 323.5,503"/>
<rect stroke="#c8a8f0" x="311.5" y="458.5" width="12" height="45"/>
<line stroke="#80d8e8" x1="317.5" y1="459" x2="317.5" y2="503"/>
<line stroke="#80d8e8" x1="312" y1="481.5" x2="323" y2="481.5"/>
<line stroke="#10a090" x1="323.5" y1="430.5" x2="438.5" y2="430.5"/>
<rect stroke="#2060d0" x="438.5" y="430.5" width="46" height="11.5"/>
<line stroke="#20a040" x1="439" y1="436.5" x2="484" y2="436.5"/>
<line stroke="#20a040" x1="462.5" y1="431" x2="462.5" y2="442"/>
<line stroke="#30c060" x1="484.5" y1="430.5" x2="784.5" y2="430.5"/>
<line stroke="#30c060" x1="484.5" y1="430.5" x2="484.5" y2="442"/>
<rect stroke="#d020c0" x="784.5" y="430.5" width="45" height="11.5"/>
<line stroke="#6020d0" x1="785" y1="436.5" x2="829" y2="436.5"/>
<line stroke="#6020d0" x1="807.5" y1="431" x2="807.5" y2="442"/>
<rect stroke="#2060d0" x="829.5" y="430.5" width="14" height="11.5"/>
<polyline stroke="#4010a0" points="843.5,442 843.5,464.5 847.5,464.5"/>
<!-- tan -->
<polyline stroke="#e8b890" points="323.5,458 323.5,442.5 835.5,442.5 835.5,476.5 869.5,476.5 869.5,627.5 506.5,627.5 506.5,509.5 323.5,509.5 323.5,503"/>
<polyline stroke="#90e090" points="847.5,464.5 879.5,464.5 879.5,501.5"/>
<polyline stroke="#e8b890" points="869.5,464.5 869.5,476.5"/>
<rect stroke="#c0c020" x="869.5" y="501.5" width="10" height="101"/>
<polyline stroke="#80e0d0" points="879.5,602.5 879.5,627.5"/>
<polyline stroke="#90e090" points="879.5,627.5 879.5,638.5 506.5,638.5 506.5,627.5"/>
<line stroke="#e8a070" x1="323.5" y1="521.5" x2="361" y2="521.5"/>
<rect stroke="#a08020" x="360.5" y="509.5" width="45" height="12"/>
<line stroke="#e8e090" x1="361" y1="515.5" x2="405" y2="515.5"/>
<line stroke="#e8e090" x1="383.5" y1="510" x2="383.5" y2="521"/>
<line stroke="#6010a0" x1="405.5" y1="521.5" x2="429" y2="521.5"/>
<rect stroke="#2060d0" x="429.5" y="509.5" width="44" height="12"/>
<line stroke="#e050d0" x1="430" y1="515.5" x2="473" y2="515.5"/>
<line stroke="#e050d0" x1="451.5" y1="510" x2="451.5" y2="521"/>
<polyline stroke="#e8e0a0" points="473.5,509.5 494.5,509.5 494.5,521.5 473.5,521.5"/>
<polyline stroke="#a01010" points="494.5,521.5 494.5,627.5 506,627.5"/>
<!-- camera -->
<rect stroke="#5a8ae0" x="510.5" y="527.5" width="14" height="15"/>
<line stroke="#5a9ae8" x1="518" y1="534.5" x2="836" y2="534.5"/>
<polygon stroke="#5a8ae0" points="826.5,518.5 836.5,528.5 836.5,540.5 826.5,550.5"/>
<g stroke="#5a8ae0">
<rect x="836.5" y="529.5" width="18" height="10"/>
<rect x="840.5" y="531.5" width="14" height="6"/>
<rect x="854.5" y="526.5" width="33" height="16"/>
<rect x="858.5" y="528.5" width="29" height="12"/>
<rect x="887.5" y="529.5" width="21" height="10"/>
<line x1="893.5" y1="530" x2="893.5" y2="539"/>
<line x1="899.5" y1="530" x2="899.5" y2="539"/>
<line x1="904.5" y1="530" x2="904.5" y2="539"/>
<line x1="866.5" y1="527" x2="866.5" y2="542"/>
<line x1="876.5" y1="527" x2="876.5" y2="542"/>
<circle cx="863" cy="546" r="2.5"/>
</g>
</g>
<!-- axis tripod -->
<line x1="299.5" y1="880" x2="299.5" y2="905" stroke="#10a010" stroke-width="1"/>
<line x1="300" y1="904.5" x2="325" y2="904.5" stroke="#c01010" stroke-width="1"/>
<text x="300" y="883" font-size="10" fill="#10a010" font-family="Liberation Sans">y</text>
<text x="325" y="906" font-size="9" fill="#b01010" font-family="Liberation Sans">x</text>
<text x="300" y="906" font-size="8" fill="#1010d0" font-family="Liberation Sans">z</text>
<!-- viewcube partial -->
<path d="M866 188 Q846 212.5 866 237 L866 228 Q857 212.5 866 197Z" fill="#c9cfd9"/>
<path d="M865 197 Q857 212.5 865 228" stroke="#6a707a" fill="none" stroke-width="1.3"/>
<text x="849" y="218" font-size="10" fill="#e8e8e8" font-family="Liberation Sans">西</text>
<path d="M854 172 V165 L858 161.5 L862 165 V172Z" fill="#d4d8de"/><rect x="856" y="166" width="4" height="1" fill="#888"/>
</svg>

<div class="t" style="left:95px;top:171px;font-size:12px;color:#e8e8e8">选择</div>
<div class="t" style="left:139px;top:171px;font-size:12px;color:#e8e8e8">显示</div>
<div class="t" style="left:183px;top:171px;font-size:12px;color:#e8e8e8">编辑</div>
<div class="a" style="left:84px;top:192px;width:150px;height:23px;border:1px solid #5c5c5c;background:#444"></div>
<svg style="left:256px;top:194px" width="11" height="7"><path d="M0.5 0.5 L3.5 3.5 L0.5 6.5 M5.5 0.5 L8.5 3.5 L5.5 6.5" stroke="#6a6ab8" stroke-width="1.3" fill="none"/></svg>
<div class="a" style="left:80px;top:221px;width:22px;height:20px;background:#5b8bc8"></div>
<svg style="left:80px;top:221px" width="22" height="20"><circle cx="11" cy="10" r="5.5" fill="#d0d0d0" stroke="#333" stroke-width="0.8"/></svg>
<div class="a" style="left:80px;top:244px;width:22px;height:20px;background:#5b8bc8"></div>
<svg style="left:80px;top:244px" width="22" height="20"><circle cx="9" cy="8" r="5" fill="#d0d0d0" stroke="#333" stroke-width="0.8"/><rect x="9" y="9" width="8" height="8" fill="#d0d0d0" stroke="#333" stroke-width="0.8"/></svg>
<div class="a" style="left:80px;top:267px;width:22px;height:20px;background:#5b8bc8"></div>
<svg style="left:80px;top:267px" width="22" height="20"><circle cx="11" cy="8" r="5" fill="#d0d0d0" stroke="#333" stroke-width="0.8"/><rect x="9" y="13" width="4" height="4" fill="#d0d0d0"/></svg>
<div class="a" style="left:80px;top:290px;width:22px;height:20px;background:#5b8bc8"></div>
<svg style="left:80px;top:290px" width="22" height="20"><rect x="4" y="6" width="10" height="9" rx="1" fill="#d0d0d0" stroke="#333" stroke-width="0.8"/><path d="M14 8 L18 6 V15 L14 13Z" fill="#d0d0d0"/></svg>
<div class="a" style="left:80px;top:313px;width:22px;height:20px;background:#5b8bc8"></div>
<svg style="left:80px;top:313px" width="22" height="20"><path d="M4 17 V4 L18 17Z" fill="#d0d0d0" stroke="#333" stroke-width="0.8"/><path d="M7 14 V10 L11 14Z" fill="#5a8ac6"/></svg>
<div class="a" style="left:80px;top:336px;width:22px;height:20px;background:#5b8bc8"></div>
<svg style="left:80px;top:336px" width="22" height="20"><path d="M4 7 Q8 4 11 7 T18 7 M4 11 Q8 8 11 11 T18 11 M4 15 Q8 12 11 15 T18 15" stroke="#d0d0d0" stroke-width="1.8" fill="none"/></svg>
<div class="a" style="left:80px;top:359px;width:22px;height:20px;background:#5b8bc8"></div>
<svg style="left:80px;top:359px" width="22" height="20"><rect x="4" y="3" width="14" height="14" fill="none" stroke="#40c0c0" stroke-width="1.2"/><circle cx="9" cy="9" r="3.5" fill="#d0d0d0"/><rect x="9" y="9" width="6" height="6" fill="#d0d0d0" stroke="#333" stroke-width="0.6"/></svg>
<div class="a" style="left:80px;top:382px;width:22px;height:20px;background:#5b8bc8"></div>
<svg style="left:80px;top:382px" width="22" height="20"><circle cx="11" cy="10" r="6.5" fill="#d0d0d0" stroke="#333" stroke-width="0.8"/><path d="M11 6 V12 M8 10 L11 13 L14 10" stroke="#40c0c0" stroke-width="1.5" fill="none"/></svg>
<div class="a" style="left:80px;top:405px;width:22px;height:20px;background:#5b8bc8"></div>
<svg style="left:80px;top:405px" width="22" height="20"><path d="M5 4 L15 14" stroke="#d0d0d0" stroke-width="3"/><path d="M15 13 L18 17" stroke="#333" stroke-width="1.5"/><circle cx="6" cy="5" r="2.5" fill="#d0d0d0"/></svg>
<div class="a" style="left:80px;top:428px;width:22px;height:20px;background:#5b8bc8"></div>
<svg style="left:80px;top:428px" width="22" height="20"><rect x="5" y="4" width="12" height="12" fill="#d0d0d0" stroke="#333" stroke-width="0.8"/><rect x="6" y="7" width="10" height="1.5" fill="#333"/></svg>
<div class="a" style="left:80px;top:451px;width:22px;height:20px;background:#5b8bc8"></div>
<svg style="left:80px;top:451px" width="22" height="20"><circle cx="11" cy="10" r="6" fill="none" stroke="#d0d0d0" stroke-width="2" stroke-dasharray="2 1.5"/><circle cx="11" cy="10" r="2.5" fill="#d0d0d0"/></svg>
<div class="a" style="left:80px;top:474px;width:22px;height:20px;background:#5b8bc8"></div>
<svg style="left:80px;top:474px" width="22" height="20"><path d="M3 10 Q11 3 19 10 Q11 17 3 10Z" fill="#d0d0d0" stroke="#333" stroke-width="0.8"/><circle cx="11" cy="10" r="2.6" fill="#333"/></svg>
<div class="a" style="left:82px;top:499px;width:18px;height:1px;background:#666"></div>
<div class="a" style="left:82px;top:574px;width:18px;height:1px;background:#666"></div>
<svg style="left:80px;top:506px" width="22" height="16"><rect x="5" y="0" width="12" height="15" fill="#d0d0d0" stroke="#222" stroke-width="0.6"/><path d="M7 4 H14 M7 7 H14 M7 10 H12" stroke="#333"/></svg>
<svg style="left:80px;top:529px" width="22" height="16"><rect x="5" y="0" width="12" height="15" fill="#d0d0d0" stroke="#222" stroke-width="0.6"/></svg>
<svg style="left:80px;top:552px" width="22" height="16"><rect x="5" y="0" width="12" height="15" fill="#d0d0d0" stroke="#222" stroke-width="0.6"/><path d="M7 4 H14 M7 7 H12 M7 10 H14" stroke="#333"/></svg>
<svg style="left:80px;top:580px" width="22" height="16"><path d="M4 0 H18 L13 7 V14 L9 12 V7Z" fill="#888"/><circle cx="15" cy="11" r="3" fill="none" stroke="#aaa" stroke-width="1.5"/></svg>
<svg style="left:80px;top:603px" width="22" height="16"><path d="M4 0 H18 L13 7 V14 L9 12 V7Z" fill="#d0d0d0"/></svg>
<svg style="left:80px;top:627px" width="22" height="16"><path d="M5 4 H9 V2 H12 V4 H17 V14 H5Z" fill="none" stroke="#d0d0d0" stroke-width="1.3"/></svg>
<div class="a" style="left:105px;top:218px;width:163px;height:20px;background:#3f3f3f;border:1px solid #555"></div>
<div class="t" style="left:108px;top:222px;font-size:12px;color:#f0f0f0">名称(按升序排序)</div>
<div class="a" style="left:114px;top:248px;width:1px;height:558px;background:repeating-linear-gradient(#777 0 1px,transparent 1px 3px)"></div>
<div class="a" style="left:155px;top:239px;width:113px;height:18px;background:#4a4a4a"></div>
<div class="a" style="left:115px;top:248px;width:8px;height:1px;background:repeating-linear-gradient(90deg,#777 0 1px,transparent 1px 3px)"></div>
<svg style="left:124px;top:242px" width="14" height="11"><path d="M0 5 Q7 -2 14 5 Q7 12 0 5Z" fill="#d0d0d0"/><circle cx="7" cy="5" r="2.6" fill="#333"/><circle cx="6" cy="4" r="0.8" fill="#ddd"/></svg>
<svg style="left:139px;top:240px" width="15" height="16"><rect x="0" y="2" width="10" height="10" fill="#d0d0d0"/><path d="M11 5 L14 2 V12 L11 9Z" fill="#d0d0d0"/></svg>
<div class="t" style="left:159px;top:243px;font-size:12px;color:#f4f4f4">Camera001</div>
<div class="a" style="left:155px;top:257px;width:113px;height:18px;background:#555555"></div>
<div class="a" style="left:115px;top:266px;width:8px;height:1px;background:repeating-linear-gradient(90deg,#777 0 1px,transparent 1px 3px)"></div>
<svg style="left:124px;top:260px" width="14" height="11"><path d="M0 5 Q7 -2 14 5 Q7 12 0 5Z" fill="#d0d0d0"/><circle cx="7" cy="5" r="2.6" fill="#333"/><circle cx="6" cy="4" r="0.8" fill="#ddd"/></svg>
<svg style="left:139px;top:258px" width="15" height="16"><rect x="0" y="2" width="10" height="10" fill="#d0d0d0"/><path d="M11 5 L14 2 V12 L11 9Z" fill="#d0d0d0"/></svg>
<div class="t" style="left:159px;top:261px;font-size:12px;color:#f4f4f4">Camera001.Target</div>
<div class="a" style="left:155px;top:275px;width:113px;height:18px;background:#4a4a4a"></div>
<div class="a" style="left:115px;top:284px;width:8px;height:1px;background:repeating-linear-gradient(90deg,#777 0 1px,transparent 1px 3px)"></div>
<svg style="left:124px;top:278px" width="14" height="11"><path d="M0 5 Q7 -2 14 5 Q7 12 0 5Z" fill="#d0d0d0"/><circle cx="7" cy="5" r="2.6" fill="#333"/><circle cx="6" cy="4" r="0.8" fill="#ddd"/></svg>
<svg style="left:139px;top:276px" width="15" height="16"><circle cx="5" cy="5" r="4.5" fill="#d0d0d0" stroke="#444" stroke-width="0.7"/><rect x="6" y="6" width="8" height="8" fill="#d0d0d0" stroke="#444" stroke-width="0.7"/></svg>
<div class="t" style="left:159px;top:279px;font-size:12px;font-style:italic;color:#f4f4f4">Layer:0</div>
<div class="a" style="left:155px;top:293px;width:113px;height:18px;background:#555555"></div>
<div class="a" style="left:115px;top:302px;width:8px;height:1px;background:repeating-linear-gradient(90deg,#777 0 1px,transparent 1px 3px)"></div>
<svg style="left:124px;top:296px" width="14" height="11"><path d="M0 5 Q7 -2 14 5 Q7 12 0 5Z" fill="#d0d0d0"/><circle cx="7" cy="5" r="2.6" fill="#333"/><circle cx="6" cy="4" r="0.8" fill="#ddd"/></svg>
<svg style="left:139px;top:294px" width="15" height="16"><circle cx="5" cy="5" r="4.5" fill="#d0d0d0" stroke="#444" stroke-width="0.7"/><rect x="6" y="6" width="8" height="8" fill="#d0d0d0" stroke="#444" stroke-width="0.7"/></svg>
<div class="t" style="left:159px;top:297px;font-size:12px;color:#f4f4f4">Line001</div>
<div class="a" style="left:155px;top:311px;width:113px;height:18px;background:#4a4a4a"></div>
<div class="a" style="left:115px;top:320px;width:8px;height:1px;background:repeating-linear-gradient(90deg,#777 0 1px,transparent 1px 3px)"></div>
<svg style="left:124px;top:314px" width="14" height="11"><path d="M0 5 Q7 -2 14 5 Q7 12 0 5Z" fill="#d0d0d0"/><circle cx="7" cy="5" r="2.6" fill="#333"/><circle cx="6" cy="4" r="0.8" fill="#ddd"/></svg>
<svg style="left:139px;top:312px" width="15" height="16"><circle cx="5" cy="5" r="4.5" fill="#d0d0d0" stroke="#444" stroke-width="0.7"/><rect x="6" y="6" width="8" height="8" fill="#d0d0d0" stroke="#444" stroke-width="0.7"/></svg>
<div class="t" style="left:159px;top:315px;font-size:12px;color:#f4f4f4">Line002</div>
<div class="a" style="left:155px;top:329px;width:113px;height:18px;background:#555555"></div>
<div class="a" style="left:115px;top:338px;width:8px;height:1px;background:repeating-linear-gradient(90deg,#777 0 1px,transparent 1px 3px)"></div>
<svg style="left:124px;top:332px" width="14" height="11"><path d="M0 5 Q7 -2 14 5 Q7 12 0 5Z" fill="#d0d0d0"/><circle cx="7" cy="5" r="2.6" fill="#333"/><circle cx="6" cy="4" r="0.8" fill="#ddd"/></svg>
<svg style="left:139px;top:330px" width="15" height="16"><circle cx="8" cy="7" r="5.5" fill="#d0d0d0"/></svg>
<div class="t" style="left:159px;top:333px;font-size:12px;color:#f4f4f4">Plane001</div>
<div class="a" style="left:155px;top:347px;width:113px;height:18px;background:#4a4a4a"></div>
<div class="a" style="left:115px;top:356px;width:8px;height:1px;background:repeating-linear-gradient(90deg,#777 0 1px,transparent 1px 3px)"></div>
<svg style="left:124px;top:350px" width="14" height="11"><path d="M0 5 Q7 -2 14 5 Q7 12 0 5Z" fill="#d0d0d0"/><circle cx="7" cy="5" r="2.6" fill="#333"/><circle cx="6" cy="4" r="0.8" fill="#ddd"/></svg>
<svg style="left:139px;top:348px" width="15" height="16"><circle cx="8" cy="7" r="5.5" fill="#d0d0d0"/></svg>
<div class="t" style="left:159px;top:351px;font-size:12px;color:#f4f4f4">Plane002</div>
<div class="a" style="left:155px;top:365px;width:113px;height:18px;background:#555555"></div>
<div class="a" style="left:115px;top:374px;width:8px;height:1px;background:repeating-linear-gradient(90deg,#777 0 1px,transparent 1px 3px)"></div>
<svg style="left:124px;top:368px" width="14" height="11"><path d="M0 5 Q7 -2 14 5 Q7 12 0 5Z" fill="#d0d0d0"/><circle cx="7" cy="5" r="2.6" fill="#333"/><circle cx="6" cy="4" r="0.8" fill="#ddd"/></svg>
<svg style="left:139px;top:366px" width="15" height="16"><circle cx="8" cy="7" r="5.5" fill="#d0d0d0"/></svg>
<div class="t" style="left:159px;top:369px;font-size:12px;color:#f4f4f4">Plane003</div>
<div class="a" style="left:155px;top:383px;width:113px;height:18px;background:#4a4a4a"></div>
<div class="a" style="left:115px;top:392px;width:8px;height:1px;background:repeating-linear-gradient(90deg,#777 0 1px,transparent 1px 3px)"></div>
<svg style="left:124px;top:386px" width="14" height="11"><path d="M0 5 Q7 -2 14 5 Q7 12 0 5Z" fill="#d0d0d0"/><circle cx="7" cy="5" r="2.6" fill="#333"/><circle cx="6" cy="4" r="0.8" fill="#ddd"/></svg>
<svg style="left:139px;top:384px" width="15" height="16"><circle cx="8" cy="7" r="5.5" fill="#d0d0d0"/></svg>
<div class="t" style="left:159px;top:387px;font-size:12px;color:#f4f4f4">Plane004</div>
<div class="a" style="left:155px;top:401px;width:113px;height:18px;background:#555555"></div>
<div class="a" style="left:115px;top:410px;width:8px;height:1px;background:repeating-linear-gradient(90deg,#777 0 1px,transparent 1px 3px)"></div>
<svg style="left:124px;top:404px" width="14" height="11"><path d="M0 5 Q7 -2 14 5 Q7 12 0 5Z" fill="#d0d0d0"/><circle cx="7" cy="5" r="2.6" fill="#333"/><circle cx="6" cy="4" r="0.8" fill="#ddd"/></svg>
<svg style="left:139px;top:402px" width="15" height="16"><circle cx="8" cy="7" r="5.5" fill="#d0d0d0"/></svg>
<div class="t" style="left:159px;top:405px;font-size:12px;color:#f4f4f4">Plane005</div>
<div class="a" style="left:155px;top:419px;width:113px;height:18px;background:#4a4a4a"></div>
<div class="a" style="left:115px;top:428px;width:8px;height:1px;background:repeating-linear-gradient(90deg,#777 0 1px,transparent 1px 3px)"></div>
<svg style="left:124px;top:422px" width="14" height="11"><path d="M0 5 Q7 -2 14 5 Q7 12 0 5Z" fill="#d0d0d0"/><circle cx="7" cy="5" r="2.6" fill="#333"/><circle cx="6" cy="4" r="0.8" fill="#ddd"/></svg>
<svg style="left:139px;top:420px" width="15" height="16"><circle cx="5" cy="5" r="4.5" fill="#d0d0d0" stroke="#444" stroke-width="0.7"/><rect x="6" y="6" width="8" height="8" fill="#d0d0d0" stroke="#444" stroke-width="0.7"/></svg>
<div class="t" style="left:159px;top:423px;font-size:12px;color:#f4f4f4">Rectangle001</div>
<div class="a" style="left:155px;top:437px;width:113px;height:18px;background:#555555"></div>
<div class="a" style="left:115px;top:446px;width:8px;height:1px;background:repeating-linear-gradient(90deg,#777 0 1px,transparent 1px 3px)"></div>
<svg style="left:124px;top:440px" width="14" height="11"><path d="M0 5 Q7 -2 14 5 Q7 12 0 5Z" fill="#d0d0d0"/><circle cx="7" cy="5" r="2.6" fill="#333"/><circle cx="6" cy="4" r="0.8" fill="#ddd"/></svg>
<svg style="left:139px;top:438px" width="15" height="16"><circle cx="5" cy="5" r="4.5" fill="#d0d0d0" stroke="#444" stroke-width="0.7"/><rect x="6" y="6" width="8" height="8" fill="#d0d0d0" stroke="#444" stroke-width="0.7"/></svg>
<div class="t" style="left:159px;top:441px;font-size:12px;color:#f4f4f4">Rectangle002</div>
<div class="a" style="left:155px;top:455px;width:113px;height:18px;background:#4a4a4a"></div>
<div class="a" style="left:115px;top:464px;width:8px;height:1px;background:repeating-linear-gradient(90deg,#777 0 1px,transparent 1px 3px)"></div>
<svg style="left:124px;top:458px" width="14" height="11"><path d="M0 5 Q7 -2 14 5 Q7 12 0 5Z" fill="#d0d0d0"/><circle cx="7" cy="5" r="2.6" fill="#333"/><circle cx="6" cy="4" r="0.8" fill="#ddd"/></svg>
<svg style="left:139px;top:456px" width="15" height="16"><circle cx="5" cy="5" r="4.5" fill="#d0d0d0" stroke="#444" stroke-width="0.7"/><rect x="6" y="6" width="8" height="8" fill="#d0d0d0" stroke="#444" stroke-width="0.7"/></svg>
<div class="t" style="left:159px;top:459px;font-size:12px;color:#f4f4f4">Rectangle003</div>
<div class="a" style="left:155px;top:473px;width:113px;height:18px;background:#555555"></div>
<div class="a" style="left:115px;top:482px;width:8px;height:1px;background:repeating-linear-gradient(90deg,#777 0 1px,transparent 1px 3px)"></div>
<svg style="left:124px;top:476px" width="14" height="11"><path d="M0 5 Q7 -2 14 5 Q7 12 0 5Z" fill="#d0d0d0"/><circle cx="7" cy="5" r="2.6" fill="#333"/><circle cx="6" cy="4" r="0.8" fill="#ddd"/></svg>
<svg style="left:139px;top:474px" width="15" height="16"><circle cx="5" cy="5" r="4.5" fill="#d0d0d0" stroke="#444" stroke-width="0.7"/><rect x="6" y="6" width="8" height="8" fill="#d0d0d0" stroke="#444" stroke-width="0.7"/></svg>
<div class="t" style="left:159px;top:477px;font-size:12px;color:#f4f4f4">Rectangle004</div>
<div class="a" style="left:155px;top:491px;width:113px;height:18px;background:#4a4a4a"></div>
<div class="a" style="left:115px;top:500px;width:8px;height:1px;background:repeating-linear-gradient(90deg,#777 0 1px,transparent 1px 3px)"></div>
<svg style="left:124px;top:494px" width="14" height="11"><path d="M0 5 Q7 -2 14 5 Q7 12 0 5Z" fill="#d0d0d0"/><circle cx="7" cy="5" r="2.6" fill="#333"/><circle cx="6" cy="4" r="0.8" fill="#ddd"/></svg>
<svg style="left:139px;top:492px" width="15" height="16"><circle cx="5" cy="5" r="4.5" fill="#d0d0d0" stroke="#444" stroke-width="0.7"/><rect x="6" y="6" width="8" height="8" fill="#d0d0d0" stroke="#444" stroke-width="0.7"/></svg>
<div class="t" style="left:159px;top:495px;font-size:12px;color:#f4f4f4">Rectangle005</div>
<div class="a" style="left:155px;top:509px;width:113px;height:18px;background:#555555"></div>
<div class="a" style="left:115px;top:518px;width:8px;height:1px;background:repeating-linear-gradient(90deg,#777 0 1px,transparent 1px 3px)"></div>
<svg style="left:124px;top:512px" width="14" height="11"><path d="M0 5 Q7 -2 14 5 Q7 12 0 5Z" fill="#d0d0d0"/><circle cx="7" cy="5" r="2.6" fill="#333"/><circle cx="6" cy="4" r="0.8" fill="#ddd"/></svg>
<svg style="left:139px;top:510px" width="15" height="16"><circle cx="5" cy="5" r="4.5" fill="#d0d0d0" stroke="#444" stroke-width="0.7"/><rect x="6" y="6" width="8" height="8" fill="#d0d0d0" stroke="#444" stroke-width="0.7"/></svg>
<div class="t" style="left:159px;top:513px;font-size:12px;color:#f4f4f4">Rectangle006</div>
<div class="a" style="left:155px;top:527px;width:113px;height:18px;background:#4a4a4a"></div>
<div class="a" style="left:115px;top:536px;width:8px;height:1px;background:repeating-linear-gradient(90deg,#777 0 1px,transparent 1px 3px)"></div>
<svg style="left:124px;top:530px" width="14" height="11"><path d="M0 5 Q7 -2 14 5 Q7 12 0 5Z" fill="#d0d0d0"/><circle cx="7" cy="5" r="2.6" fill="#333"/><circle cx="6" cy="4" r="0.8" fill="#ddd"/></svg>
<svg style="left:139px;top:528px" width="15" height="16"><circle cx="5" cy="5" r="4.5" fill="#d0d0d0" stroke="#444" stroke-width="0.7"/><rect x="6" y="6" width="8" height="8" fill="#d0d0d0" stroke="#444" stroke-width="0.7"/></svg>
<div class="t" style="left:159px;top:531px;font-size:12px;color:#f4f4f4">Rectangle008</div>
<div class="a" style="left:155px;top:545px;width:113px;height:18px;background:#555555"></div>
<div class="a" style="left:115px;top:554px;width:8px;height:1px;background:repeating-linear-gradient(90deg,#777 0 1px,transparent 1px 3px)"></div>
<svg style="left:124px;top:548px" width="14" height="11"><path d="M0 5 Q7 -2 14 5 Q7 12 0 5Z" fill="#d0d0d0"/><circle cx="7" cy="5" r="2.6" fill="#333"/><circle cx="6" cy="4" r="0.8" fill="#ddd"/></svg>
<svg style="left:139px;top:546px" width="15" height="16"><circle cx="5" cy="5" r="4.5" fill="#d0d0d0" stroke="#444" stroke-width="0.7"/><rect x="6" y="6" width="8" height="8" fill="#d0d0d0" stroke="#444" stroke-width="0.7"/></svg>
<div class="t" style="left:159px;top:549px;font-size:12px;color:#f4f4f4">Rectangle010</div>
<div class="a" style="left:155px;top:563px;width:113px;height:18px;background:#4a4a4a"></div>
<div class="a" style="left:115px;top:572px;width:8px;height:1px;background:repeating-linear-gradient(90deg,#777 0 1px,transparent 1px 3px)"></div>
<svg style="left:124px;top:566px" width="14" height="11"><path d="M0 5 Q7 -2 14 5 Q7 12 0 5Z" fill="#d0d0d0"/><circle cx="7" cy="5" r="2.6" fill="#333"/><circle cx="6" cy="4" r="0.8" fill="#ddd"/></svg>
<svg style="left:139px;top:564px" width="15" height="16"><circle cx="5" cy="5" r="4.5" fill="#d0d0d0" stroke="#444" stroke-width="0.7"/><rect x="6" y="6" width="8" height="8" fill="#d0d0d0" stroke="#444" stroke-width="0.7"/></svg>
<div class="t" style="left:159px;top:567px;font-size:12px;color:#f4f4f4">Rectangle011</div>
<div class="a" style="left:155px;top:581px;width:113px;height:18px;background:#555555"></div>
<div class="a" style="left:115px;top:590px;width:8px;height:1px;background:repeating-linear-gradient(90deg,#777 0 1px,transparent 1px 3px)"></div>
<svg style="left:124px;top:584px" width="14" height="11"><path d="M0 5 Q7 -2 14 5 Q7 12 0 5Z" fill="#d0d0d0"/><circle cx="7" cy="5" r="2.6" fill="#333"/><circle cx="6" cy="4" r="0.8" fill="#ddd"/></svg>
<svg style="left:139px;top:582px" width="15" height="16"><circle cx="5" cy="5" r="4.5" fill="#d0d0d0" stroke="#444" stroke-width="0.7"/><rect x="6" y="6" width="8" height="8" fill="#d0d0d0" stroke="#444" stroke-width="0.7"/></svg>
<div class="t" style="left:159px;top:585px;font-size:12px;color:#f4f4f4">Rectangle012</div>
<div class="a" style="left:155px;top:599px;width:113px;height:18px;background:#4a4a4a"></div>
<div class="a" style="left:115px;top:608px;width:8px;height:1px;background:repeating-linear-gradient(90deg,#777 0 1px,transparent 1px 3px)"></div>
<svg style="left:124px;top:602px" width="14" height="11"><path d="M0 5 Q7 -2 14 5 Q7 12 0 5Z" fill="#d0d0d0"/><circle cx="7" cy="5" r="2.6" fill="#333"/><circle cx="6" cy="4" r="0.8" fill="#ddd"/></svg>
<svg style="left:139px;top:600px" width="15" height="16"><circle cx="5" cy="5" r="4.5" fill="#d0d0d0" stroke="#444" stroke-width="0.7"/><rect x="6" y="6" width="8" height="8" fill="#d0d0d0" stroke="#444" stroke-width="0.7"/></svg>
<div class="t" style="left:159px;top:603px;font-size:12px;color:#f4f4f4">Rectangle013</div>
<div class="a" style="left:155px;top:617px;width:113px;height:18px;background:#555555"></div>
<div class="a" style="left:115px;top:626px;width:8px;height:1px;background:repeating-linear-gradient(90deg,#777 0 1px,transparent 1px 3px)"></div>
<svg style="left:124px;top:620px" width="14" height="11"><path d="M0 5 Q7 -2 14 5 Q7 12 0 5Z" fill="#d0d0d0"/><circle cx="7" cy="5" r="2.6" fill="#333"/><circle cx="6" cy="4" r="0.8" fill="#ddd"/></svg>
<svg style="left:139px;top:618px" width="15" height="16"><circle cx="5" cy="5" r="4.5" fill="#d0d0d0" stroke="#444" stroke-width="0.7"/><rect x="6" y="6" width="8" height="8" fill="#d0d0d0" stroke="#444" stroke-width="0.7"/></svg>
<div class="t" style="left:159px;top:621px;font-size:12px;color:#f4f4f4">Rectangle014</div>
<div class="a" style="left:155px;top:635px;width:113px;height:18px;background:#4a4a4a"></div>
<div class="a" style="left:115px;top:644px;width:8px;height:1px;background:repeating-linear-gradient(90deg,#777 0 1px,transparent 1px 3px)"></div>
<svg style="left:124px;top:638px" width="14" height="11"><path d="M0 5 Q7 -2 14 5 Q7 12 0 5Z" fill="#d0d0d0"/><circle cx="7" cy="5" r="2.6" fill="#333"/><circle cx="6" cy="4" r="0.8" fill="#ddd"/></svg>
<svg style="left:139px;top:636px" width="15" height="16"><circle cx="5" cy="5" r="4.5" fill="#d0d0d0" stroke="#444" stroke-width="0.7"/><rect x="6" y="6" width="8" height="8" fill="#d0d0d0" stroke="#444" stroke-width="0.7"/></svg>
<div class="t" style="left:159px;top:639px;font-size:12px;color:#f4f4f4">Rectangle015</div>
<div class="a" style="left:155px;top:653px;width:113px;height:18px;background:#555555"></div>
<div class="a" style="left:115px;top:662px;width:8px;height:1px;background:repeating-linear-gradient(90deg,#777 0 1px,transparent 1px 3px)"></div>
<svg style="left:124px;top:656px" width="14" height="11"><path d="M0 5 Q7 -2 14 5 Q7 12 0 5Z" fill="#d0d0d0"/><circle cx="7" cy="5" r="2.6" fill="#333"/><circle cx="6" cy="4" r="0.8" fill="#ddd"/></svg>
<svg style="left:139px;top:654px" width="15" height="16"><circle cx="5" cy="5" r="4.5" fill="#d0d0d0" stroke="#444" stroke-width="0.7"/><rect x="6" y="6" width="8" height="8" fill="#d0d0d0" stroke="#444" stroke-width="0.7"/></svg>
<div class="t" style="left:159px;top:657px;font-size:12px;color:#f4f4f4">Rectangle016</div>
<div class="a" style="left:155px;top:671px;width:113px;height:18px;background:#4a4a4a"></div>
<div class="a" style="left:115px;top:680px;width:8px;height:1px;background:repeating-linear-gradient(90deg,#777 0 1px,transparent 1px 3px)"></div>
<svg style="left:124px;top:674px" width="14" height="11"><path d="M0 5 Q7 -2 14 5 Q7 12 0 5Z" fill="#d0d0d0"/><circle cx="7" cy="5" r="2.6" fill="#333"/><circle cx="6" cy="4" r="0.8" fill="#ddd"/></svg>
<svg style="left:139px;top:672px" width="15" height="16"><circle cx="5" cy="5" r="4.5" fill="#d0d0d0" stroke="#444" stroke-width="0.7"/><rect x="6" y="6" width="8" height="8" fill="#d0d0d0" stroke="#444" stroke-width="0.7"/></svg>
<div class="t" style="left:159px;top:675px;font-size:12px;color:#f4f4f4">Rectangle017</div>
<div class="a" style="left:155px;top:689px;width:113px;height:18px;background:#555555"></div>
<div class="a" style="left:115px;top:698px;width:8px;height:1px;background:repeating-linear-gradient(90deg,#777 0 1px,transparent 1px 3px)"></div>
<svg style="left:124px;top:692px" width="14" height="11"><path d="M0 5 Q7 -2 14 5 Q7 12 0 5Z" fill="#d0d0d0"/><circle cx="7" cy="5" r="2.6" fill="#333"/><circle cx="6" cy="4" r="0.8" fill="#ddd"/></svg>
<svg style="left:139px;top:690px" width="15" height="16"><circle cx="5" cy="5" r="4.5" fill="#d0d0d0" stroke="#444" stroke-width="0.7"/><rect x="6" y="6" width="8" height="8" fill="#d0d0d0" stroke="#444" stroke-width="0.7"/></svg>
<div class="t" style="left:159px;top:693px;font-size:12px;color:#f4f4f4">Rectangle018</div>
<div class="a" style="left:155px;top:707px;width:113px;height:18px;background:#4a4a4a"></div>
<div class="a" style="left:115px;top:716px;width:8px;height:1px;background:repeating-linear-gradient(90deg,#777 0 1px,transparent 1px 3px)"></div>
<svg style="left:124px;top:710px" width="14" height="11"><path d="M0 5 Q7 -2 14 5 Q7 12 0 5Z" fill="#d0d0d0"/><circle cx="7" cy="5" r="2.6" fill="#333"/><circle cx="6" cy="4" r="0.8" fill="#ddd"/></svg>
<svg style="left:139px;top:708px" width="15" height="16"><circle cx="5" cy="5" r="4.5" fill="#d0d0d0" stroke="#444" stroke-width="0.7"/><rect x="6" y="6" width="8" height="8" fill="#d0d0d0" stroke="#444" stroke-width="0.7"/></svg>
<div class="t" style="left:159px;top:711px;font-size:12px;color:#f4f4f4">Rectangle019</div>
<div class="a" style="left:155px;top:725px;width:113px;height:18px;background:#555555"></div>
<div class="a" style="left:115px;top:734px;width:8px;height:1px;background:repeating-linear-gradient(90deg,#777 0 1px,transparent 1px 3px)"></div>
<svg style="left:124px;top:728px" width="14" height="11"><path d="M0 5 Q7 -2 14 5 Q7 12 0 5Z" fill="#d0d0d0"/><circle cx="7" cy="5" r="2.6" fill="#333"/><circle cx="6" cy="4" r="0.8" fill="#ddd"/></svg>
<svg style="left:139px;top:726px" width="15" height="16"><circle cx="5" cy="5" r="4.5" fill="#d0d0d0" stroke="#444" stroke-width="0.7"/><rect x="6" y="6" width="8" height="8" fill="#d0d0d0" stroke="#444" stroke-width="0.7"/></svg>
<div class="t" style="left:159px;top:729px;font-size:12px;color:#f4f4f4">Rectangle020</div>
<div class="a" style="left:155px;top:743px;width:113px;height:18px;background:#4a4a4a"></div>
<div class="a" style="left:115px;top:752px;width:8px;height:1px;background:repeating-linear-gradient(90deg,#777 0 1px,transparent 1px 3px)"></div>
<svg style="left:124px;top:746px" width="14" height="11"><path d="M0 5 Q7 -2 14 5 Q7 12 0 5Z" fill="#d0d0d0"/><circle cx="7" cy="5" r="2.6" fill="#333"/><circle cx="6" cy="4" r="0.8" fill="#ddd"/></svg>
<svg style="left:139px;top:744px" width="15" height="16"><circle cx="5" cy="5" r="4.5" fill="#d0d0d0" stroke="#444" stroke-width="0.7"/><rect x="6" y="6" width="8" height="8" fill="#d0d0d0" stroke="#444" stroke-width="0.7"/></svg>
<div class="t" style="left:159px;top:747px;font-size:12px;color:#f4f4f4">Rectangle021</div>
<div class="a" style="left:155px;top:761px;width:113px;height:18px;background:#555555"></div>
<div class="a" style="left:115px;top:770px;width:8px;height:1px;background:repeating-linear-gradient(90deg,#777 0 1px,transparent 1px 3px)"></div>
<svg style="left:124px;top:764px" width="14" height="11"><path d="M0 5 Q7 -2 14 5 Q7 12 0 5Z" fill="#d0d0d0"/><circle cx="7" cy="5" r="2.6" fill="#333"/><circle cx="6" cy="4" r="0.8" fill="#ddd"/></svg>
<svg style="left:139px;top:762px" width="15" height="16"><circle cx="5" cy="5" r="4.5" fill="#d0d0d0" stroke="#444" stroke-width="0.7"/><rect x="6" y="6" width="8" height="8" fill="#d0d0d0" stroke="#444" stroke-width="0.7"/></svg>
<div class="t" style="left:159px;top:765px;font-size:12px;color:#f4f4f4">Rectangle022</div>
<div class="a" style="left:155px;top:779px;width:113px;height:18px;background:#4a4a4a"></div>
<div class="a" style="left:115px;top:788px;width:8px;height:1px;background:repeating-linear-gradient(90deg,#777 0 1px,transparent 1px 3px)"></div>
<svg style="left:124px;top:782px" width="14" height="11"><path d="M0 5 Q7 -2 14 5 Q7 12 0 5Z" fill="#d0d0d0"/><circle cx="7" cy="5" r="2.6" fill="#333"/><circle cx="6" cy="4" r="0.8" fill="#ddd"/></svg>
<svg style="left:139px;top:780px" width="15" height="16"><circle cx="5" cy="5" r="4.5" fill="#d0d0d0" stroke="#444" stroke-width="0.7"/><rect x="6" y="6" width="8" height="8" fill="#d0d0d0" stroke="#444" stroke-width="0.7"/></svg>
<div class="t" style="left:159px;top:783px;font-size:12px;color:#f4f4f4">Rectangle023</div>
<div class="a" style="left:155px;top:797px;width:113px;height:18px;background:#555555"></div>
<div class="a" style="left:115px;top:806px;width:8px;height:1px;background:repeating-linear-gradient(90deg,#777 0 1px,transparent 1px 3px)"></div>
<svg style="left:124px;top:800px" width="30" height="14"><path d="M0 6 Q7 -1 14 6 Q7 13 0 6Z" fill="#333"/><path d="M15 1 V13 H28Z" fill="none" stroke="#d0d0d0" stroke-width="1.6"/></svg>
<div class="a" style="left:105px;top:885px;width:163px;height:17px;background:#f0f0f0;border:1px solid #ccc"></div>
<div class="a" style="left:123px;top:887px;width:63px;height:13px;background:linear-gradient(#f4f4f4,#d8d8d8);border:1px solid #999;border-radius:2px"></div>
<div class="a" style="left:151px;top:890px;width:6px;height:6px;border-left:1px solid #555;border-right:1px solid #555"></div><div class="a" style="left:153px;top:890px;width:1px;height:6px;background:#555"></div>
<svg style="left:110px;top:889px" width="5" height="8"><path d="M5 0 L0 4 L5 8Z" fill="#333"/></svg>
<svg style="left:257px;top:889px" width="5" height="8"><path d="M0 0 L5 4 L0 8Z" fill="#333"/></svg>
<div class="a" style="left:84px;top:906px;width:145px;height:23px;border:1px solid #5c5c5c;background:#444"></div>
<div class="t" style="left:86px;top:910px;font-size:12px;color:#f0f000">默认</div>
<svg style="left:232px;top:915px" width="7" height="4"><path d="M0 0 L7 0 L3.5 4Z" fill="#111"/></svg>
<div class="a" style="left:246px;top:905px;width:1px;height:25px;background:#222"></div>
<svg style="left:256px;top:908px" width="11" height="7"><path d="M0.5 0.5 L3.5 3.5 L0.5 6.5 M5.5 0.5 L8.5 3.5 L5.5 6.5" stroke="#6a6ab8" stroke-width="1.3" fill="none"/></svg>
<div class="a" style="left:10px;top:811px;width:19px;height:19px;background:#444;border-radius:3px"></div>
<svg style="left:17px;top:816px" width="6" height="9"><path d="M0 0 L6 4.5 L0 9Z" fill="#ddd"/></svg>
<div class="a" style="left:4px;top:841px;width:36px;height:43px;background:linear-gradient(#56677e,#4a6a98 75%,#3a7ad8);border-radius:5px 0 0 5px"></div>
<div class="a" style="left:7px;top:849px;width:16px;height:27px;background:linear-gradient(#6a7484,#5e6a7a);border:1px solid #2a2e36;border-radius:2px"></div>
<div class="a" style="left:23px;top:849px;width:15px;height:27px;background:linear-gradient(#6a7484,#5e6a7a);border:1px solid #2a2e36;border-radius:2px"></div>
<div class="a" style="left:4px;top:886px;width:36px;height:43px;background:#4c4c4c;border-radius:5px 0 0 5px"></div>
<div class="a" style="left:7px;top:893px;width:15px;height:13px;background:#5e5e5e;border:1px solid #2a2a2a;border-radius:2px"></div>
<div class="a" style="left:23px;top:893px;width:15px;height:13px;background:#5e5e5e;border:1px solid #2a2a2a;border-radius:2px"></div>
<div class="a" style="left:7px;top:907px;width:15px;height:13px;background:#5e5e5e;border:1px solid #2a2a2a;border-radius:2px"></div>
<div class="a" style="left:23px;top:907px;width:15px;height:13px;background:#5e5e5e;border:1px solid #2a2a2a;border-radius:2px"></div>

<div class="a" style="left:1620px;top:156px;width:300px;height:776px;background:#444"></div>
<!-- tabs -->
<div class="a" style="left:1624px;top:165px;width:30px;height:27px;background:#3a3a3a;border-radius:4px 4px 0 0"></div>
<div class="a" style="left:1656px;top:165px;width:30px;height:27px;background:#3a3a3a;border-radius:4px 4px 0 0"></div>
<div class="a" style="left:1688px;top:165px;width:30px;height:27px;background:#3a3a3a;border-radius:4px 4px 0 0"></div>
<div class="a" style="left:1720px;top:165px;width:30px;height:27px;background:#3a3a3a;border-radius:4px 4px 0 0"></div>
<div class="a" style="left:1752px;top:165px;width:30px;height:27px;background:#3a3a3a;border-radius:4px 4px 0 0"></div>
<div class="a" style="left:1784px;top:165px;width:30px;height:27px;background:#3a3a3a;border-radius:4px 4px 0 0"></div>
<svg style="left:1624px;top:165px" width="200" height="27">
<path d="M15 6 V22 M7 14.5 H23" stroke="#a8a8a8" stroke-width="2"/>
<rect x="34.5" y="3.5" width="25" height="22" fill="none" stroke="#bbb" stroke-width="1.2" stroke-dasharray="1.2 2"/>
<rect x="40.5" y="7.5" width="13" height="13" fill="none" stroke="#40c0c0" stroke-width="1"/>
<g fill="#40c0c0" stroke="#333" stroke-width="0.5"><rect x="39" y="6" width="3" height="3"/><rect x="52" y="6" width="3" height="3"/><rect x="39" y="19" width="3" height="3"/><rect x="52" y="19" width="3" height="3"/></g>
<path d="M43.5 18 Q44 12 50.5 10" stroke="#ddd" stroke-width="2" fill="none"/>
<g transform="translate(-4 0)"><rect x="77" y="6" width="12" height="5" fill="#a8a8a8"/>
<path d="M83 11 V13.5 M78 17 V14.5 H88 V17" stroke="#40c0c0" stroke-width="1.2" fill="none"/>
<rect x="76" y="17" width="3" height="3" fill="#40c0c0"/><rect x="87" y="17" width="3" height="3" fill="#40c0c0"/>
<path d="M112 8 A6.5 6.5 0 0 0 112 21" stroke="#40a8a8" stroke-width="1" fill="none"/><path d="M114 8.5 A6.5 6.5 0 0 0 114 20.5" stroke="#40a8a8" stroke-width="1" fill="none"/>
<circle cx="117.5" cy="14.5" r="6.5" fill="#a8a8a8"/>
<rect x="139" y="7" width="16" height="9" fill="#a8a8a8"/><rect x="146" y="17" width="2" height="2" fill="#a8a8a8"/><rect x="143" y="19" width="8" height="1.3" fill="#a8a8a8"/></g>
<g transform="translate(-2 -1)"><path d="M174 10 L185 21" stroke="#a8a8a8" stroke-width="2.5"/><path d="M171 7 A4 4 0 1 0 177 12" stroke="#a8a8a8" stroke-width="2.2" fill="none"/><circle cx="185.5" cy="21.5" r="2" fill="#a8a8a8"/></g>
</svg>
<!-- panel body -->
<div class="a" style="left:1623px;top:191px;width:293px;height:740px;background:#444;border:1px solid #3a3a3a;border-radius:0 4px 4px 4px"></div>
<div class="a" style="left:1629px;top:200px;width:262px;height:19px;background:#5c5c5c;border-bottom:1px solid #3a3a3a"></div>
<div class="a" style="left:1898px;top:200px;width:16px;height:19px;background:#c0307c;border:1px solid #222;border-left:0;border-top:0"></div>
<div class="a" style="left:1629px;top:229px;width:286px;height:20px;background:#676767"></div>
<div class="t" style="left:1632px;top:232px;font-size:12px;color:#eaeaea">修改器列表</div>
<svg style="left:1902px;top:236px" width="7" height="5"><path d="M0 0 L7 0 L3.5 5Z" fill="#eee"/></svg>
<div class="a" style="left:1629px;top:254px;width:286px;height:127px;background:#444;border:2px solid #e8e8e8"></div>
<!-- stack buttons -->
<svg style="left:1630px;top:389px" width="160" height="24">
<path d="M4 18 L9 13 M8 8 L14 14 L12 16 L6 10Z M10 6 L16 12" stroke="#9a9a9a" stroke-width="1.8" fill="none"/>
<rect x="28" y="4" width="1.5" height="15" fill="#111"/>
<rect x="35" y="2" width="22" height="20" rx="3" fill="#55688a"/>
<rect x="43" y="6" width="6" height="13" rx="2" fill="none" stroke="#aab" stroke-width="1.3"/>
<rect x="64" y="4" width="1.5" height="15" fill="#111"/>
<circle cx="78" cy="8" r="3.5" fill="none" stroke="#888" stroke-width="1.3"/><circle cx="81" cy="14" r="4" fill="none" stroke="#888" stroke-width="1.3"/><circle cx="85" cy="10" r="3" fill="#888"/>
<path d="M100 7 H111 M102 7 V19 H109 V7 M104 9 V17 M107 9 V17 M103 5 H108" stroke="#888" stroke-width="1.2" fill="none"/>
<rect x="124" y="4" width="1.5" height="15" fill="#111"/>
<rect x="134" y="5" width="13" height="14" fill="#ddd" stroke="#333" stroke-width="0.8"/><path d="M136 9 H140 M136 13 H140 M141 13 V17 M136 16 H140" stroke="#333"/><path d="M140 14 L149 4" stroke="#f0a800" stroke-width="2.5"/>
</svg>
<div class="a" style="left:1633px;top:428px;width:129px;height:1px;background:#777"></div>
<div class="a" style="left:1765px;top:427px;width:12px;height:3px;background:repeating-linear-gradient(90deg,#bbb 0 1px,transparent 1px 2px)"></div>
<div class="a" style="left:1782px;top:428px;width:128px;height:1px;background:#777"></div>
<div class="a" style="left:1910px;top:435px;width:4px;height:495px;background:#3c3c3c;border-radius:2px"></div>
<div class="dh" style="left:1625px;top:158px;width:294px"></div>

<div class="a" style="left:865px;top:44px;width:279px;height:317px;background:#515151;border:1px solid #2e2e2e;border-top:0;box-shadow:1px 1px 0 #333"></div>
<div class="dh" style="left:870px;top:45px;width:270px"></div>
<div class="a" style="left:866px;top:57px;width:277px;height:20px;background:#5f8ac2"></div>
<div class="t" style="left:891px;top:60px;font-size:12px;color:#ececec">自定义用户界面 (<u>C</u>)<span style="letter-spacing:2.6px">...</span></div>
<div class="t" style="left:891px;top:88px;font-size:12px;color:#ececec">加载自定义用户界面方案<span style="letter-spacing:2.6px">...</span></div>
<div class="t" style="left:891px;top:110px;font-size:12px;color:#ececec">保存自定义用户界面方案<span style="letter-spacing:2.6px">...</span></div>
<div class="t" style="left:891px;top:133px;font-size:12px;color:#ececec">还原为启动布局 (<u>R</u>)</div>
<div class="t" style="left:891px;top:156px;font-size:12px;color:#ececec">锁定 UI 布局 (<u>K</u>)</div>
<div class="t" style="left:891px;top:183px;font-size:12px;color:#ececec">显示 UI (<u>H</u>)</div>
<div class="t" style="left:891px;top:210px;font-size:12px;color:#ececec">自定义 UI 与默认设置切换器</div>
<div class="t" style="left:891px;top:237px;font-size:12px;color:#ececec">配置用户路径 (<u>C</u>)<span style="letter-spacing:2.6px">...</span></div>
<div class="t" style="left:891px;top:260px;font-size:12px;color:#ececec">配置系统路径 (<u>C</u>)<span style="letter-spacing:2.6px">...</span></div>
<div class="t" style="left:891px;top:287px;font-size:12px;color:#ececec">单位设置 (<u>U</u>)<span style="letter-spacing:2.6px">...</span></div>
<div class="t" style="left:891px;top:314px;font-size:12px;color:#ececec">插件管理器<span style="letter-spacing:2.6px">...</span></div>
<div class="t" style="left:891px;top:341px;font-size:12px;color:#ececec">首选项 (<u>P</u>)<span style="letter-spacing:2.6px">...</span></div>
<div class="a" style="left:873px;top:80px;width:264px;height:1px;background:#666"></div>
<div class="a" style="left:873px;top:176px;width:264px;height:1px;background:#666"></div>
<div class="a" style="left:873px;top:203px;width:264px;height:1px;background:#666"></div>
<div class="a" style="left:873px;top:230px;width:264px;height:1px;background:#666"></div>
<div class="a" style="left:873px;top:280px;width:264px;height:1px;background:#666"></div>
<div class="a" style="left:873px;top:307px;width:264px;height:1px;background:#666"></div>
<div class="a" style="left:873px;top:334px;width:264px;height:1px;background:#666"></div>
<div class="a" style="left:872px;top:156px;width:13px;height:13px;background:#666;border:1px solid #444"></div>
<svg style="left:874px;top:158px" width="10" height="9"><path d="M1 4 L4 7 L9 1" stroke="#ddd" stroke-width="2" fill="none"/></svg>
<div class="t" style="left:1090px;top:157px;font-size:11px;font-family:'Liberation Mono',monospace;color:#e0e0e0">Alt+O</div>
<svg style="left:1133px;top:186px" width="5" height="8"><path d="M0 0 L5 4 L0 8Z" fill="#9ab8e0"/></svg>
<svg style="left:871px;top:236px" width="16" height="14"><circle cx="6" cy="4" r="3.5" fill="#ccc"/><path d="M0 13 Q1 8 6 8 Q10 8 11 13Z" fill="#ccc"/><circle cx="12" cy="10" r="3" fill="none" stroke="#f0a800" stroke-width="2"/></svg>
<div class="dv" style="left:2px;top:937px;height:46px"></div>
<div class="a" style="left:10px;top:937px;width:14px;height:16px;background:#585858;border-radius:3px"></div>
<svg style="left:14px;top:940px" width="6" height="10"><path d="M5 0 L0 5 L5 10" stroke="#ccc" fill="none" stroke-width="1.2"/></svg>
<div class="a" style="left:26px;top:937px;width:123px;height:16px;background:#5a5a5a;border-radius:3px"></div>
<div class="t" style="left:65px;top:940px;font-size:11px;color:#ddd;letter-spacing:0.3px">0 &nbsp;/&nbsp; 100</div>
<div class="a" style="left:151px;top:937px;width:14px;height:16px;background:#585858;border-radius:3px"></div>
<svg style="left:156px;top:940px" width="6" height="10"><path d="M0 0 L5 5 L0 10" stroke="#ccc" fill="none" stroke-width="1.2"/></svg>
<div class="a" style="left:9px;top:957px;width:1911px;height:2px;background:#1a1a1a"></div>
<div class="a" style="left:59px;top:959px;width:1811px;height:25px;background:#2b2b2b"></div>
<svg style="left:22px;top:965px" width="16" height="12"><path d="M0 1 H3 M0 4 H3 M0 7 H3 M0 10 H3" stroke="#ccc"/><path d="M5 6 Q7 -1 9 6 T14 9" stroke="#40c0c0" stroke-width="1.5" fill="none"/></svg>
<svg style="left:0;top:0" width="1920" height="1066" viewBox="0 0 1920 1066"><g stroke="#9a9a9a" stroke-width="1" shape-rendering="crispEdges"><line x1="67.5" y1="959" x2="67.5" y2="970" /><line x1="67.5" y1="981" x2="67.5" y2="984" /><line x1="85.5" y1="959" x2="85.5" y2="969" /><line x1="103.5" y1="959" x2="103.5" y2="969" /><line x1="121.5" y1="959" x2="121.5" y2="969" /><line x1="138.5" y1="959" x2="138.5" y2="969" /><line x1="156.5" y1="959" x2="156.5" y2="970" /><line x1="156.5" y1="981" x2="156.5" y2="984" /><line x1="174.5" y1="959" x2="174.5" y2="969" /><line x1="192.5" y1="959" x2="192.5" y2="969" /><line x1="210.5" y1="959" x2="210.5" y2="969" /><line x1="228.5" y1="959" x2="228.5" y2="969" /><line x1="246.5" y1="959" x2="246.5" y2="970" /><line x1="246.5" y1="981" x2="246.5" y2="984" /><line x1="264.5" y1="959" x2="264.5" y2="969" /><line x1="282.5" y1="959" x2="282.5" y2="969" /><line x1="300.5" y1="959" x2="300.5" y2="969" /><line x1="318.5" y1="959" x2="318.5" y2="969" /><line x1="336.5" y1="959" x2="336.5" y2="970" /><line x1="336.5" y1="981" x2="336.5" y2="984" /><line x1="354.5" y1="959" x2="354.5" y2="969" /><line x1="372.5" y1="959" x2="372.5" y2="969" /><line x1="390.5" y1="959" x2="390.5" y2="969" /><line x1="408.5" y1="959" x2="408.5" y2="969" /><line x1="426.5" y1="959" x2="426.5" y2="970" /><line x1="426.5" y1="981" x2="426.5" y2="984" /><line x1="444.5" y1="959" x2="444.5" y2="969" /><line x1="462.5" y1="959" x2="462.5" y2="969" /><line x1="480.5" y1="959" x2="480.5" y2="969" /><line x1="498.5" y1="959" x2="498.5" y2="969" /><line x1="516.5" y1="959" x2="516.5" y2="970" /><line x1="516.5" y1="981" x2="516.5" y2="984" /><line x1="534.5" y1="959" x2="534.5" y2="969" /><line x1="552.5" y1="959" x2="552.5" y2="969" /><line x1="570.5" y1="959" x2="570.5" y2="969" /><line x1="588.5" y1="959" x2="588.5" y2="969" /><line x1="606.5" y1="959" x2="606.5" y2="970" /><line x1="606.5" y1="981" x2="606.5" y2="984" /><line x1="624.5" y1="959" x2="624.5" y2="969" /><line x1="642.5" y1="959" x2="642.5" y2="969" /><line x1="660.5" y1="959" x2="660.5" y2="969" /><line x1="678.5" y1="959" x2="678.5" y2="969" /><line x1="696.5" y1="959" x2="696.5" y2="970" /><line x1="696.5" y1="981" x2="696.5" y2="984" /><line x1="714.5" y1="959" x2="714.5" y2="969" /><line x1="731.5" y1="959" x2="731.5" y2="969" /><line x1="749.5" y1="959" x2="749.5" y2="969" /><line x1="767.5" y1="959" x2="767.5" y2="969" /><line x1="785.5" y1="959" x2="785.5" y2="970" /><line x1="785.5" y1="981" x2="785.5" y2="984" /><line x1="803.5" y1="959" x2="803.5" y2="969" /><line x1="821.5" y1="959" x2="821.5" y2="969" /><line x1="839.5" y1="959" x2="839.5" y2="969" /><line x1="857.5" y1="959" x2="857.5" y2="969" /><line x1="875.5" y1="959" x2="875.5" y2="970" /><line x1="875.5" y1="981" x2="875.5" y2="984" /><line x1="893.5" y1="959" x2="893.5" y2="969" /><line x1="911.5" y1="959" x2="911.5" y2="969" /><line x1="929.5" y1="959" x2="929.5" y2="969" /><line x1="947.5" y1="959" x2="947.5" y2="969" /><line x1="965.5" y1="959" x2="965.5" y2="970" /><line x1="965.5" y1="981" x2="965.5" y2="984" /><line x1="983.5" y1="959" x2="983.5" y2="969" /><line x1="1001.5" y1="959" x2="1001.5" y2="969" /><line x1="1019.5" y1="959" x2="1019.5" y2="969" /><line x1="1037.5" y1="959" x2="1037.5" y2="969" /><line x1="1055.5" y1="959" x2="1055.5" y2="970" /><line x1="1055.5" y1="981" x2="1055.5" y2="984" /><line x1="1073.5" y1="959" x2="1073.5" y2="969" /><line x1="1091.5" y1="959" x2="1091.5" y2="969" /><line x1="1109.5" y1="959" x2="1109.5" y2="969" /><line x1="1127.5" y1="959" x2="1127.5" y2="969" /><line x1="1145.5" y1="959" x2="1145.5" y2="970" /><line x1="1145.5" y1="981" x2="1145.5" y2="984" /><line x1="1163.5" y1="959" x2="1163.5" y2="969" /><line x1="1181.5" y1="959" x2="1181.5" y2="969" /><line x1="1199.5" y1="959" x2="1199.5" y2="969" /><line x1="1217.5" y1="959" x2="1217.5" y2="969" /><line x1="1235.5" y1="959" x2="1235.5" y2="970" /><line x1="1235.5" y1="981" x2="1235.5" y2="984" /><line x1="1253.5" y1="959" x2="1253.5" y2="969" /><line x1="1271.5" y1="959" x2="1271.5" y2="969" /><line x1="1289.5" y1="959" x2="1289.5" y2="969" /><line x1="1307.5" y1="959" x2="1307.5" y2="969" /><line x1="1324.5" y1="959" x2="1324.5" y2="970" /><line x1="1324.5" y1="981" x2="1324.5" y2="984" /><line x1="1342.5" y1="959" x2="1342.5" y2="969" /><line x1="1360.5" y1="959" x2="1360.5" y2="969" /><line x1="1378.5" y1="959" x2="1378.5" y2="969" /><line x1="1396.5" y1="959" x2="1396.5" y2="969" /><line x1="1414.5" y1="959" x2="1414.5" y2="970" /><line x1="1414.5" y1="981" x2="1414.5" y2="984" /><line x1="1432.5" y1="959" x2="1432.5" y2="969" /><line x1="1450.5" y1="959" x2="1450.5" y2="969" /><line x1="1468.5" y1="959" x2="1468.5" y2="969" /><line x1="1486.5" y1="959" x2="1486.5" y2="969" /><line x1="1504.5" y1="959" x2="1504.5" y2="970" /><line x1="1504.5" y1="981" x2="1504.5" y2="984" /><line x1="1522.5" y1="959" x2="1522.5" y2="969" /><line x1="1540.5" y1="959" x2="1540.5" y2="969" /><line x1="1558.5" y1="959" x2="1558.5" y2="969" /><line x1="1576.5" y1="959" x2="1576.5" y2="969" /><line x1="1594.5" y1="959" x2="1594.5" y2="970" /><line x1="1594.5" y1="981" x2="1594.5" y2="984" /><line x1="1612.5" y1="959" x2="1612.5" y2="969" /><line x1="1630.5" y1="959" x2="1630.5" y2="969" /><line x1="1648.5" y1="959" x2="1648.5" y2="969" /><line x1="1666.5" y1="959" x2="1666.5" y2="969" /><line x1="1684.5" y1="959" x2="1684.5" y2="970" /><line x1="1684.5" y1="981" x2="1684.5" y2="984" /><line x1="1702.5" y1="959" x2="1702.5" y2="969" /><line x1="1720.5" y1="959" x2="1720.5" y2="969" /><line x1="1738.5" y1="959" x2="1738.5" y2="969" /><line x1="1756.5" y1="959" x2="1756.5" y2="969" /><line x1="1774.5" y1="959" x2="1774.5" y2="970" /><line x1="1774.5" y1="981" x2="1774.5" y2="984" /><line x1="1792.5" y1="959" x2="1792.5" y2="969" /><line x1="1810.5" y1="959" x2="1810.5" y2="969" /><line x1="1828.5" y1="959" x2="1828.5" y2="969" /><line x1="1846.5" y1="959" x2="1846.5" y2="969" /><line x1="1864.5" y1="959" x2="1864.5" y2="970" /><line x1="1864.5" y1="981" x2="1864.5" y2="984" /></g><g font-size="11" fill="#e0e0e0" font-family="Liberation Sans"><text x="156.5" y="981" text-anchor="middle">5</text><text x="246.5" y="981" text-anchor="middle">10</text><text x="336.5" y="981" text-anchor="middle">15</text><text x="426.5" y="981" text-anchor="middle">20</text><text x="516.5" y="981" text-anchor="middle">25</text><text x="606.5" y="981" text-anchor="middle">30</text><text x="696.5" y="981" text-anchor="middle">35</text><text x="785.5" y="981" text-anchor="middle">40</text><text x="875.5" y="981" text-anchor="middle">45</text><text x="965.5" y="981" text-anchor="middle">50</text><text x="1055.5" y="981" text-anchor="middle">55</text><text x="1145.5" y="981" text-anchor="middle">60</text><text x="1235.5" y="981" text-anchor="middle">65</text><text x="1324.5" y="981" text-anchor="middle">70</text><text x="1414.5" y="981" text-anchor="middle">75</text><text x="1504.5" y="981" text-anchor="middle">80</text><text x="1594.5" y="981" text-anchor="middle">85</text><text x="1684.5" y="981" text-anchor="middle">90</text><text x="1774.5" y="981" text-anchor="middle">95</text><text x="1864.5" y="981" text-anchor="middle">100</text></g></svg>
<div class="a" style="left:62px;top:960px;width:8px;height:24px;background:#8a8a2a;border:1px solid #6a6a20"></div>
<div class="t" style="left:63px;top:971px;font-size:10px;color:#f0f060">0</div>
<div class="a" style="left:4px;top:989px;width:98px;height:22px;background:#dbc3c3;border:2px solid #f0f0f0;outline:1px solid #888"></div>
<div class="a" style="left:4px;top:1013px;width:98px;height:22px;background:#fff;border:1px solid #aaa"></div>
<div class="t" style="left:9px;top:1017px;font-size:12px;font-family:'Liberation Mono',monospace;color:#8a8aa0">MAXScript 迷</div>
<div class="a" style="left:105px;top:987px;width:2px;height:50px;background:#1e1e1e"></div>
<div class="t" style="left:111px;top:996px;font-size:12px;color:#eee">未选定任何对象</div>
<div class="t" style="left:111px;top:1021px;font-size:12px;color:#eee">单击并拖动以选择并移动对象</div>
<svg style="left:999px;top:993px" width="70" height="17"><path d="M1 5 V1 H5 M11 1 H15 V5 M15 11 V15 H11 M5 15 H1 V11" stroke="#aaa" stroke-width="1.4" fill="none"/><rect x="4" y="4" width="8" height="8" fill="none" stroke="#aaa" stroke-width="1.2"/><path d="M31 7 V4 A4 4 0 0 1 39 4 V7" stroke="#999" stroke-width="1.5" fill="none"/><rect x="29" y="7" width="12" height="9" rx="1" fill="none" stroke="#999" stroke-width="1.3"/><rect x="54" y="1" width="15" height="15" fill="none" stroke="#ddd" stroke-width="1.3"/><path d="M61.5 3 L67 8.5 L61.5 14 L56 8.5Z" fill="#ddd"/><circle cx="61.5" cy="8.5" r="2" fill="#444"/></svg>
<div class="t" style="left:1077px;top:996px;font-size:12px;font-family:'Liberation Mono',monospace;color:#e8e8e8">X:</div>
<div class="a" style="left:1092px;top:993px;width:57px;height:17px;background:#585858"></div>
<div class="t" style="left:1094px;top:997px;font-size:11px;font-family:'Liberation Mono',monospace;color:#8e8e8e;letter-spacing:-0.6px">6331.271m</div>
<div class="t" style="left:1163px;top:996px;font-size:12px;font-family:'Liberation Mono',monospace;color:#e8e8e8">Y:</div>
<div class="a" style="left:1178px;top:993px;width:57px;height:17px;background:#585858"></div>
<div class="t" style="left:1180px;top:997px;font-size:11px;font-family:'Liberation Mono',monospace;color:#8e8e8e;letter-spacing:-0.6px">5767.13mm</div>
<div class="t" style="left:1249px;top:996px;font-size:12px;font-family:'Liberation Mono',monospace;color:#e8e8e8">Z:</div>
<div class="a" style="left:1264px;top:993px;width:57px;height:17px;background:#585858"></div>
<div class="t" style="left:1266px;top:997px;font-size:11px;font-family:'Liberation Mono',monospace;color:#8e8e8e;letter-spacing:-0.6px">0.0mm</div>
<div class="t" style="left:1337px;top:996px;font-size:12px;color:#eee">栅格 = 0.0mm</div>
<div class="a" style="left:1309px;top:1016px;width:2px;height:20px;background:#111"></div>
<div class="a" style="left:1311px;top:1016px;width:21px;height:20px;background:#5b8bc8;border-radius:3px"></div>
<svg style="left:1314px;top:1019px" width="15" height="14"><path d="M7.5 1 L14 4.5 V10 L7.5 13.5 L1 10 V4.5Z M1 4.5 L7.5 8 L14 4.5 M7.5 8 V13.5" stroke="#ddd" stroke-width="1.2" fill="none"/></svg>
<div class="t" style="left:1336px;top:1021px;font-size:12px;color:#eee">添加时间标记</div>
<svg style="left:1440px;top:990px" width="130" height="45"><g fill="#d8d8d8"><rect x="9" y="5" width="2" height="12"/><path d="M17 5 L11 11 L17 17Z M24 5 L18 11 L24 17Z"/><path d="M42 5 L36 11 L42 17Z"/><rect x="44" y="5" width="2" height="12"/><rect x="48" y="5" width="2" height="12"/><path d="M60 4 L72 11 L60 18Z"/><path d="M73 17 H76 V14Z"/><rect x="81" y="5" width="2" height="12"/><rect x="85" y="5" width="2" height="12"/><path d="M89 5 L95 11 L89 17Z"/><path d="M107 5 L113 11 L107 17Z M114 5 L120 11 L114 17Z"/><rect x="120" y="5" width="2" height="12"/><path d="M16 27 L11 33 L16 39Z M18 27 L23 33 L18 39Z"/></g><g fill="#111"><rect x="30" y="4" width="2" height="15"/><rect x="102" y="4" width="2" height="15"/><rect x="30" y="25" width="2" height="16"/><rect x="102" y="25" width="2" height="16"/></g></svg>
<div class="a" style="left:1472px;top:1015px;width:69px;height:16px;background:#585858"></div>
<div class="t" style="left:1475px;top:1018px;font-size:11px;color:#ddd">0</div>
<svg style="left:1531px;top:1017px" width="6" height="12"><path d="M0 5 L3 1 L6 5Z M0 7 L3 11 L6 7Z" fill="#ccc"/></svg>
<svg style="left:1548px;top:1014px" width="17" height="18"><circle cx="6" cy="6" r="5.5" fill="#d8d8d8"/><path d="M6 2 V6 H9" stroke="#333" stroke-width="1.2" fill="none"/><circle cx="12" cy="12" r="3.5" fill="none" stroke="#f0a800" stroke-width="2.2"/></svg>
<div class="a" style="left:1578px;top:991px;width:40px;height:42px;background:#5a5a5a;border-radius:3px"></div>
<svg style="left:1583px;top:997px" width="32" height="32"><path d="M12 3 V25 M1 14 H23" stroke="#ddd" stroke-width="5"/><circle cx="14" cy="24" r="4" fill="none" stroke="#40c0c0" stroke-width="2"/><path d="M17 21 L27 11 M24 14 L27 17 M22 16 L24 18" stroke="#40c0c0" stroke-width="2"/></svg>
<div class="a" style="left:1623px;top:991px;width:65px;height:20px;background:#5a5a5a;border-radius:3px"></div>
<div class="t" style="left:1625px;top:995px;font-size:12px;color:#eee">自动关键点</div>
<div class="a" style="left:1623px;top:1013px;width:65px;height:20px;background:#5a5a5a;border-radius:3px"></div>
<div class="t" style="left:1625px;top:1017px;font-size:12px;color:#eee">设置关键点</div>
<div class="a" style="left:1693px;top:991px;width:111px;height:19px;background:#5c5c5c;border-radius:2px"></div>
<div class="t" style="left:1698px;top:995px;font-size:12px;color:#eee">选定对象</div>
<svg style="left:1790px;top:998px" width="7" height="5"><path d="M0 0 L7 0 L3.5 5Z" fill="#ddd"/></svg>
<svg style="left:1695px;top:1015px" width="20" height="19"><path d="M3 16 Q3 8 6 6 M15 16 Q15 8 12 6" stroke="#40c0c0" stroke-width="2" fill="none"/><rect x="7" y="2" width="4" height="4" fill="none" stroke="#ddd"/><rect x="2" y="3" width="2" height="2" fill="#ddd"/><rect x="14" y="3" width="2" height="2" fill="#ddd"/><path d="M16 18 H19 V15Z" fill="#ccc"/></svg>
<div class="a" style="left:1719px;top:1014px;width:85px;height:19px;background:#5a5a5a;border-radius:3px"></div>
<div class="t" style="left:1719px;top:1018px;font-size:12px;color:#eee;width:85px;overflow:hidden">关键点过滤器...</div>
<svg style="left:1818px;top:990px" width="100" height="46"><g stroke="#ddd" fill="none" stroke-width="2"><circle cx="13" cy="8" r="5"/><path d="M9 12 L4 17"/><circle cx="33" cy="11" r="4"/><path d="M30 14 L26 18"/><path d="M50 6 V3 H53 M62 3 H65 V6 M65 14 V17 H62 M53 17 H50 V14" stroke-width="1.5"/><path d="M11 30 V27 H14 M19 27 H22 V30 M22 36 V39" stroke-width="1.3" stroke-dasharray="2 1"/><circle cx="13" cy="33" r="4"/><path d="M10 36 L5 41"/></g><g fill="#40c0c0"><rect x="37" y="3" width="4" height="4"/><rect x="42" y="3" width="4" height="4"/><rect x="37" y="8" width="4" height="4"/></g><path d="M52 9 L57.5 6 L63 9 L57.5 12Z" fill="#40c0c0"/><path d="M52 9 V14 L57.5 17 V12Z" fill="#2a9a9a"/><path d="M63 9 V14 L57.5 17 V12Z" fill="#60d8d8"/><path d="M78 10 L84 6 V14 L78 17Z" fill="#40c0c0"/><path d="M73 12 L78 9 L83 12 L78 15Z" fill="#ddd"/><path d="M72 16 L77 13 L82 16 L77 19Z" fill="#ddd"/><path d="M40 40 V30 Q40 27 42 28 V34 M42 34 V26 Q43 24 45 26 V34 M45 34 V27 Q46 25 48 27 V34 M48 34 V30 Q49 28 50 30 V36 Q50 41 45 41 Q40 41 38 36 L36 32" stroke="#ddd" stroke-width="1.4" fill="#ddd"/><ellipse cx="61" cy="34" rx="8" ry="4" stroke="#ddd" stroke-width="1.5" fill="none" transform="rotate(-20 61 34)"/><circle cx="61" cy="33" r="4.5" fill="#ddd"/><path d="M58 33 Q61 29 64 32" stroke="#40c0c0" stroke-width="1.3" fill="none"/><rect x="74" y="26" width="15" height="15" fill="none" stroke="#ddd" stroke-width="1.5"/><rect x="74" y="34" width="7" height="7" fill="#ddd"/><path d="M80 35 L88 27 M84 27 H88 V31" stroke="#ddd" stroke-width="1.5" fill="none"/><g fill="#ccc"><path d="M66 16 H69 V13Z M89 16 H92 V13Z M43 40 H46 V37Z M66 40 H69 V37Z"/></g></svg>
<div class="a" style="left:0;top:1037px;width:1920px;height:4px;background:#444"></div>
<div class="a" style="left:0;top:1041px;width:1920px;height:25px;background:linear-gradient(90deg,#a7c2dd 0,#a9c4de 1500px,#8ca4c2 1560px,#889fbc 100%);border-top:1px solid #c8d8ea"></div>
<div class="a" style="left:0;top:1041px;width:58px;height:25px;background:#8fa8c6"></div>
<svg style="left:8px;top:1042px" width="40" height="24"><defs><radialGradient id="orb" cx="0.5" cy="0.3" r="0.7"><stop offset="0" stop-color="#d8ecff"/><stop offset="0.5" stop-color="#4a8ad0"/><stop offset="1" stop-color="#1a4a8a"/></radialGradient></defs><circle cx="19" cy="19" r="17" fill="url(#orb)" stroke="#6a8ab0" stroke-width="1"/><path d="M11 11 Q15 9 18 11 V17 Q15 15 11 17Z" fill="#f06030"/><path d="M20 11 Q23 9 27 11 V17 Q23 15 20 17Z" fill="#80c840"/><path d="M11 19 Q15 17 18 19 V24 H11Z" fill="#2a90e8"/><path d="M20 19 Q23 17 27 19 V24 H20Z" fill="#f8c020"/></svg>
<div class="a" style="left:60px;top:1042px;width:50px;height:24px;background:linear-gradient(#e2ecf6,#c4d6ea 45%,#aec4dc);border:1px solid #7a92b0;border-radius:3px 3px 0 0"></div>
<div class="a" style="left:122px;top:1042px;width:53px;height:24px;background:linear-gradient(#e2ecf6,#c4d6ea 45%,#aec4dc);border:1px solid #7a92b0;border-radius:3px 3px 0 0"></div>
<div class="a" style="left:184px;top:1042px;width:57px;height:24px;background:linear-gradient(#fbeaa8,#f2c860 60%,#eab040);border:1px solid #a08040;border-radius:3px 3px 0 0"></div>
<div class="a" style="left:246px;top:1042px;width:57px;height:24px;background:linear-gradient(#e2ecf6,#c4d6ea 45%,#aec4dc);border:1px solid #7a92b0;border-radius:3px 3px 0 0"></div>
<div class="a" style="left:308px;top:1042px;width:57px;height:24px;background:linear-gradient(#e2ecf6,#c4d6ea 45%,#aec4dc);border:1px solid #7a92b0;border-radius:3px 3px 0 0"></div>
<div class="a" style="left:370px;top:1042px;width:57px;height:24px;background:linear-gradient(#e2ecf6,#c4d6ea 45%,#aec4dc);border:1px solid #7a92b0;border-radius:3px 3px 0 0"></div>
<div class="a" style="left:432px;top:1042px;width:58px;height:24px;background:linear-gradient(#e2ecf6,#c4d6ea 45%,#aec4dc);border:1px solid #7a92b0;border-radius:3px 3px 0 0"></div>
<svg style="left:68px;top:1046px" width="36" height="20"><rect x="2" y="4" width="28" height="16" fill="#f0d890" stroke="#b89850"/><rect x="2" y="1" width="12" height="5" fill="#f0d890" stroke="#b89850"/><rect x="6" y="13" width="20" height="7" fill="#90c8f0"/></svg>
<svg style="left:132px;top:1043px" width="32" height="23"><circle cx="16" cy="14" r="11" fill="#50b830" stroke="#e8f8e0" stroke-width="2"/><path d="M8 12 H24 M10 17 H22" stroke="#fff" stroke-width="2.5"/></svg>
<div class="a" style="left:197px;top:1043px;width:32px;height:23px;background:linear-gradient(#3a70b0,#a8c8e0 60%,#406080)"></div>
<svg style="left:258px;top:1043px" width="32" height="23"><circle cx="16" cy="14" r="12" fill="#e87a20"/><path d="M8 14 Q14 6 22 10 Q18 14 20 20 Q12 18 8 14Z" fill="#fff"/></svg>
<svg style="left:324px;top:1044px" width="24" height="22"><rect x="3" y="1" width="18" height="21" fill="#b8c8d8" stroke="#6080a0"/><rect x="5" y="4" width="14" height="6" fill="#e8f0f8" stroke="#6080a0"/><g fill="#6080a0"><rect x="5" y="13" width="3" height="2"/><rect x="10" y="13" width="3" height="2"/><rect x="15" y="13" width="3" height="2"/><rect x="5" y="17" width="3" height="2"/><rect x="10" y="17" width="3" height="2"/><rect x="15" y="17" width="3" height="2"/></g></svg>
<svg style="left:382px;top:1044px" width="34" height="22"><ellipse cx="14" cy="11" rx="10" ry="8" fill="#60c040"/><ellipse cx="22" cy="17" rx="9" ry="7" fill="#f0f0f0"/><circle cx="10" cy="9" r="1.5" fill="#333"/><circle cx="17" cy="9" r="1.5" fill="#333"/></svg>
<div class="a" style="left:444px;top:1043px;width:24px;height:23px;background:#b8dcd8"></div>
<div class="t" style="left:450px;top:1044px;font-size:20px;font-weight:bold;color:#1a9a9a">3</div>
<svg style="left:1555px;top:1046px" width="150" height="20"><rect x="4" y="8" width="14" height="9" rx="1" fill="#ddd" stroke="#666"/><circle cx="30" cy="11" r="8" fill="#10209a" stroke="#ccc"/><text x="26" y="16" font-size="12" font-weight="bold" fill="#fff" font-family="Liberation Sans">?</text><rect x="50" y="2" width="6" height="5" fill="none" stroke="#eee"/><path d="M50 13 L53 16 L56 13Z" fill="#eee"/><path d="M70 12 L74 8 L78 12Z" fill="#eee"/><circle cx="98" cy="15" r="7" fill="#50b030"/><ellipse cx="118" cy="13" rx="7" ry="6" fill="#60c040"/><ellipse cx="122" cy="17" rx="5" ry="4" fill="#eee"/><rect x="135" y="6" width="14" height="14" rx="3" fill="#1a8ae0"/><circle cx="142" cy="13" r="5" fill="none" stroke="#fff" stroke-width="1.5"/></svg>
<svg style="left:1740px;top:1048px" width="40" height="18"><rect x="4" y="4" width="14" height="12" fill="#555" stroke="#eee" stroke-width="1.5"/><path d="M2 2 V8 M28 6 V16 L24 13 H21 V9 H24Z" stroke="#eee" stroke-width="1.5" fill="#eee"/><path d="M31 7 Q34 11 31 15 M34 5 Q38 11 34 17" stroke="#eee" fill="none"/></svg>
<div class="t" style="left:1833px;top:1046px;font-size:12px;color:#fff">16:29</div>
<div class="a" style="left:1908px;top:1042px;width:12px;height:24px;background:linear-gradient(90deg,#7890a8,#5a7088);border-left:1px solid #c8d8e8"></div><div class="t" style="left:1800px;top:1061px;font-size:12px;color:#fff">2019/12/5 星期四</div>

<svg style="left:0;top:0" width="1920" height="1066" viewBox="0 0 1920 1066">
<polygon points="1106,78 1123.5,78.4 1119,80.3 1492.5,343.3 1491,344.6 1114,88.5 1113.5,93.3" fill="#ff1c12"/>
</svg>

</body></html>
